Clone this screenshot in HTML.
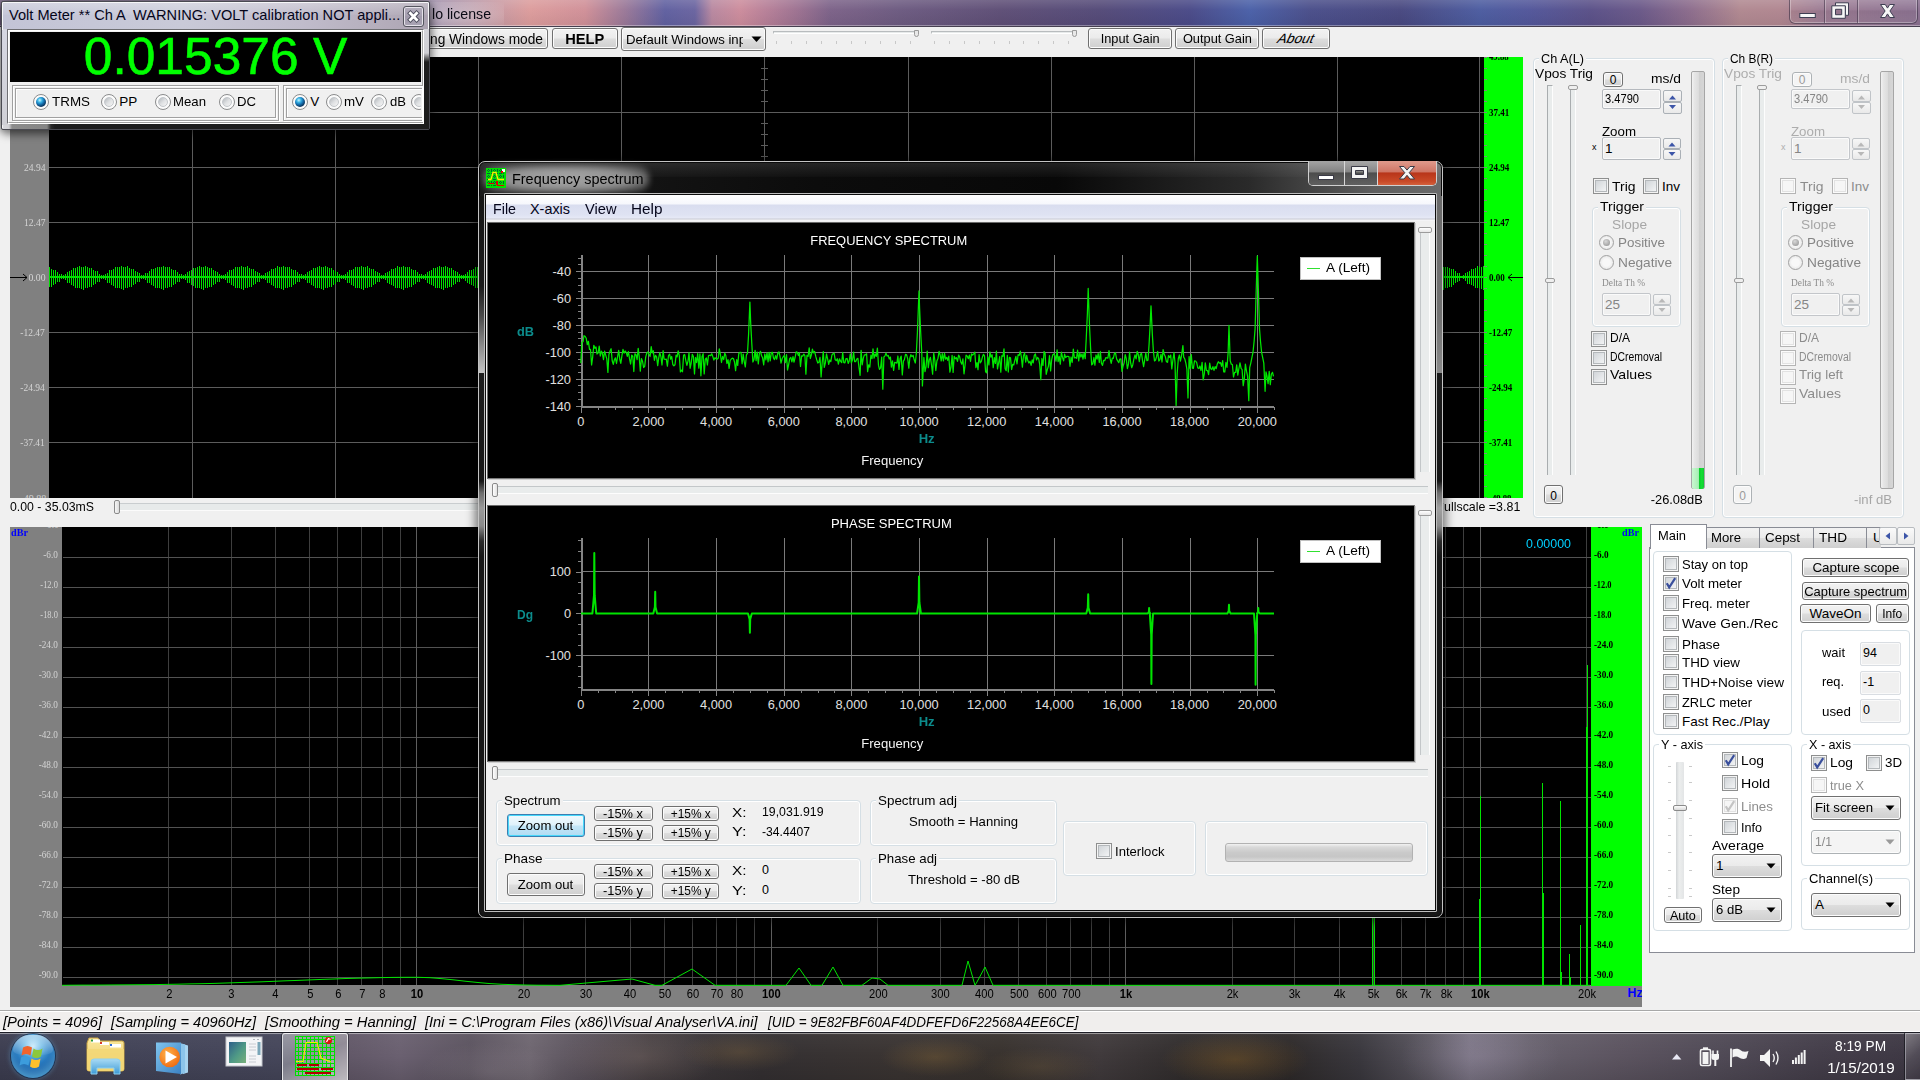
<!DOCTYPE html><html><head><meta charset="utf-8"><title>Visual Analyser</title><style>
html,body{margin:0;padding:0;}
body{width:1920px;height:1080px;overflow:hidden;position:relative;background:#f0f0f0;font-family:"Liberation Sans",sans-serif;}
div,span.t,svg{position:absolute;box-sizing:border-box;}
span.t{white-space:pre;display:block;}
.btn{border:1px solid #707070;border-radius:3px;background:linear-gradient(#f2f2f2 0%,#ebebeb 48%,#dddddd 52%,#cfcfcf 100%);box-shadow:inset 0 0 0 1px #fcfcfc;}
.btnd{border:1px solid #adb2b5;border-radius:3px;background:#f4f4f4;box-shadow:inset 0 0 0 1px #fcfcfc;}
.grp{border:1px solid #d5dfe5;border-radius:4px;box-shadow:inset 0 0 0 1px #fff;}
.edit{border:1px solid #abadb3;border-top-color:#abadb3;background:#f0f0f0;border-radius:1px;box-shadow:inset 0 0 0 1px #fff;}
.chk{width:13px;height:13px;border:1px solid #8e8f8f;background:linear-gradient(135deg,#d6d9dc 0%,#f3f4f5 100%);box-shadow:inset 0 0 0 1px #f4f4f4, inset 0 0 0 2px #b2b6b9;}
.chkd{width:13px;height:13px;border:1px solid #bcbcbc;background:#fafafa;box-shadow:inset 0 0 0 2px #f0f0f0;}
.rad{width:13px;height:13px;border:1px solid #8e8f8f;border-radius:50%;background:radial-gradient(circle at 60% 60%,#f6f6f6 0%,#e3e6e8 60%,#c9cdd0 100%);}
.radd{width:13px;height:13px;border:1px solid #b5b5b5;border-radius:50%;background:#f6f6f6;}
</style></head><body>
<div style="left:0px;top:0px;width:1920px;height:27px;background:linear-gradient(90deg,#7d6a8c 0px,#a090ac 430px,#b898a8 470px,#dc9c9c 530px,#d09098 585px,#9a7898 625px,#6060a0 665px,#6a64a0 695px,#b888a0 712px,#cc8c9c 740px,#b88098 765px,#9a7090 800px,#7c6288 830px,#6c5a80 900px,#5e4e76 1000px,#544a78 1100px,#4a4a88 1190px,#4a60a8 1250px,#4a4e8a 1310px,#484880 1400px,#4c5ca0 1480px,#52569a 1530px,#5a5088 1590px,#6a5888 1640px,#8c6c8c 1690px,#b08890 1740px,#b08690 1780px,#9a7890 1820px,#8a7090 1920px);"></div>
<div style="left:0px;top:0px;width:1920px;height:27px;background:linear-gradient(180deg,rgba(255,255,255,.14) 0px,rgba(255,255,255,.02) 10px,rgba(0,0,0,.05) 26px);"></div>
<div style="left:424px;top:2px;width:80px;height:24px;background:radial-gradient(ellipse at 40% 55%,rgba(255,255,255,.35) 0%,rgba(255,255,255,.18) 50%,rgba(255,255,255,0) 100%);"></div>
<div style="left:0px;top:25px;width:1920px;height:1px;background:rgba(255,255,255,.35);"></div>
<div style="left:0px;top:26px;width:1920px;height:1px;background:#463f50;"></div>
<span class="t" style="top:5.88px;font-size:15.5px;line-height:15.5px;color:#0a0a14;left:432.00px;transform-origin:0 0;transform:scaleX(0.9130);">lo license</span>
<div style="left:1789px;top:-2px;width:129px;height:26px;border:1px solid rgba(50,40,60,.55);border-radius:0 0 6px 6px;box-shadow:inset 0 0 0 1px rgba(255,255,255,.30);background:linear-gradient(rgba(255,255,255,.10),rgba(255,255,255,.03) 45%,rgba(0,0,0,.03) 50%,rgba(255,255,255,.05));"></div>
<div style="left:1824px;top:0px;width:1px;height:23px;background:rgba(50,40,60,.5);"></div>
<div style="left:1825px;top:0px;width:1px;height:23px;background:rgba(255,255,255,.28);"></div>
<div style="left:1857px;top:0px;width:1px;height:23px;background:rgba(50,40,60,.5);"></div>
<div style="left:1858px;top:0px;width:1px;height:23px;background:rgba(255,255,255,.28);"></div>
<svg style="left:1789px;top:0px" width="129" height="24" viewBox="0 0 129 24" >
<rect x="10.800" y="13.500" width="15.500" height="4" fill="#f6f6f6" stroke="#3e3e52" stroke-width="1"/>
<path d="M46.500 2.800 h13 v12.500 h-3 v-9 h-10z" fill="#f6f6f6" stroke="#3e3e52"/><path d="M42.800 5.800 h13.500 v12.500 h-13.500z M46.500 9.300 v5.400 h6.200 v-5.400z" fill="#f6f6f6" fill-rule="evenodd" stroke="#3e3e52"/>
<path d="M91.500 4.500 h4.800 l2.200 3.600 l2.200 -3.600 h4.800 l-4.600 6.500 l4.600 6.500 h-4.800 l-2.200 -3.600 l-2.200 3.600 h-4.800 l4.600 -6.500z" fill="#f6f6f6" stroke="#3e3e52" stroke-width="1"/>
</svg>
<div style="left:0px;top:27px;width:1920px;height:30px;background:#f0f0f0;"></div>
<div class="btn" style="left:380px;top:28px;width:168px;height:21px;"></div>
<span class="t" style="top:31.65px;font-size:14px;line-height:14px;color:#000;left:430.00px;transform-origin:0 0;transform:scaleX(0.9812);">ng Windows mode</span>
<div class="btn" style="left:552px;top:28px;width:66px;height:21px;"></div>
<span class="t" style="top:31.65px;font-size:14px;line-height:14px;color:#000;font-weight:bold;left:566.33px;transform-origin:50% 0;transform:scaleX(1.0445);">HELP</span>
<div class="btn" style="left:621px;top:27px;width:145px;height:24px;"></div>
<div style="left:626px;top:29px;width:117px;height:20px;overflow:hidden;"><span class="t" style="left:0;top:3.57px;font-size:13.500px;line-height:13.500px;transform-origin:0 0;transform:scaleX(0.9752)">Default Windows inp</span></div>
<svg style="left:750px;top:35px" width="14" height="8" viewBox="0 0 14 8" >
<path d="M1.500 1.500 h10 l-5 5.500z" fill="#000"/>
</svg>
<div style="left:773px;top:31px;width:146px;height:3px;background:#e7eaea;border:1px solid #b8bcbe;border-bottom-color:#fff;"></div>
<div style="left:914px;top:30px;width:5px;height:7px;background:#e8e8e8;border:1px solid #9a9a9a;border-radius:0 0 3px 3px;"></div>
<div style="left:776.0px;top:41px;width:1px;height:3px;background:#c8c8c8;"></div>
<div style="left:790.9px;top:41px;width:1px;height:3px;background:#c8c8c8;"></div>
<div style="left:805.8px;top:41px;width:1px;height:3px;background:#c8c8c8;"></div>
<div style="left:820.7px;top:41px;width:1px;height:3px;background:#c8c8c8;"></div>
<div style="left:835.6px;top:41px;width:1px;height:3px;background:#c8c8c8;"></div>
<div style="left:850.5px;top:41px;width:1px;height:3px;background:#c8c8c8;"></div>
<div style="left:865.4px;top:41px;width:1px;height:3px;background:#c8c8c8;"></div>
<div style="left:880.3px;top:41px;width:1px;height:3px;background:#c8c8c8;"></div>
<div style="left:895.2px;top:41px;width:1px;height:3px;background:#c8c8c8;"></div>
<div style="left:910.1px;top:41px;width:1px;height:3px;background:#c8c8c8;"></div>
<div style="left:931px;top:31px;width:146px;height:3px;background:#e7eaea;border:1px solid #b8bcbe;border-bottom-color:#fff;"></div>
<div style="left:1072px;top:30px;width:5px;height:7px;background:#e8e8e8;border:1px solid #9a9a9a;border-radius:0 0 3px 3px;"></div>
<div style="left:934.0px;top:41px;width:1px;height:3px;background:#c8c8c8;"></div>
<div style="left:948.9px;top:41px;width:1px;height:3px;background:#c8c8c8;"></div>
<div style="left:963.8px;top:41px;width:1px;height:3px;background:#c8c8c8;"></div>
<div style="left:978.7px;top:41px;width:1px;height:3px;background:#c8c8c8;"></div>
<div style="left:993.6px;top:41px;width:1px;height:3px;background:#c8c8c8;"></div>
<div style="left:1008.5px;top:41px;width:1px;height:3px;background:#c8c8c8;"></div>
<div style="left:1023.4px;top:41px;width:1px;height:3px;background:#c8c8c8;"></div>
<div style="left:1038.3px;top:41px;width:1px;height:3px;background:#c8c8c8;"></div>
<div style="left:1053.2px;top:41px;width:1px;height:3px;background:#c8c8c8;"></div>
<div style="left:1068.1px;top:41px;width:1px;height:3px;background:#c8c8c8;"></div>
<div class="btn" style="left:1088px;top:28px;width:84px;height:21px;"></div>
<span class="t" style="top:32.07px;font-size:13.5px;line-height:13.5px;color:#000;left:1098.85px;transform-origin:50% 0;transform:scaleX(0.9471);">Input Gain</span>
<div class="btn" style="left:1175px;top:28px;width:84px;height:21px;"></div>
<span class="t" style="top:32.07px;font-size:13.5px;line-height:13.5px;color:#000;left:1180.60px;transform-origin:50% 0;transform:scaleX(0.9479);">Output Gain</span>
<div class="btn" style="left:1262px;top:28px;width:68px;height:21px;"></div>
<span class="t" style="left:1275px;top:31.500px;font-size:13.500px;line-height:13.500px;color:#000;transform-origin:0 100%;transform:skewX(-24deg) scaleX(1.02);">About</span>
<div style="left:10px;top:57px;width:39px;height:441px;background:#808080;"></div>
<div style="left:49px;top:57px;width:1435px;height:441px;background:#000;"></div>
<div style="left:1484px;top:57px;width:39px;height:441px;background:#00ff00;"></div>
<svg style="left:0px;top:57px" width="1523" height="442" viewBox="0 0 1523 442" shape-rendering="crispEdges">
<path d="M192.5 0V441 M335.5 0V441 M478.5 0V441 M621.5 0V441 M764.5 0V441 M908.5 0V441 M1051.5 0V441 M1194.5 0V441 M1337.5 0V441 M1479.5 0V441 M49 55.5H1487 M49 110.5H1487 M49 165.5H1487 M49 220.5H1487 M49 275.5H1487 M49 330.5H1487 M49 385.5H1487" stroke="#5c5c5c" stroke-width="1" fill="none"/>
<path d="M761 11.5H768 M761 22.5H768 M761 33.5H768 M761 44.5H768 M761 55.5H768 M761 66.5H768 M761 77.5H768 M761 88.5H768 M761 99.5H768 M761 110.5H768 M761 121.5H768 M761 132.5H768 M761 143.5H768 M761 154.5H768 M761 165.5H768 M761 176.5H768 M761 187.5H768 M761 198.5H768 M761 209.5H768 M761 220.5H768 M761 231.5H768 M761 242.5H768 M761 253.5H768 M761 264.5H768 M761 275.5H768 M761 286.5H768 M761 297.5H768 M761 308.5H768 M761 319.5H768 M761 330.5H768 M761 341.5H768 M761 352.5H768 M761 363.5H768 M761 374.5H768 M761 385.5H768 M761 396.5H768 M761 407.5H768 M761 418.5H768 M761 429.5H768" stroke="#5c5c5c" stroke-width="1" fill="none"/>
<path d="M49.5 210.0V230.0 M51.5 211.7V230.3 M53.5 212.7V227.9 M55.5 213.1V226.6 M57.5 215.2V225.2 M59.5 216.6V224.8 M61.5 217.3V222.0 M63.5 218.4V221.7 M65.5 216.9V223.3 M67.5 214.7V226.1 M69.5 214.2V226.3 M71.5 212.9V227.7 M73.5 211.1V228.9 M75.5 211.0V231.1 M77.5 210.3V230.6 M79.5 209.0V231.2 M81.5 209.5V231.5 M83.5 209.5V232.7 M85.5 208.9V231.2 M87.5 210.2V230.8 M89.5 210.8V230.0 M91.5 210.9V230.3 M93.5 212.7V227.9 M95.5 213.9V226.6 M97.5 214.4V225.2 M99.5 216.7V224.8 M101.5 218.1V222.0 M103.5 217.6V221.7 M105.5 216.9V223.3 M107.5 215.5V226.1 M109.5 213.3V226.4 M111.5 212.9V227.7 M113.5 211.9V228.9 M115.5 210.2V231.1 M117.5 210.3V230.6 M119.5 209.8V231.2 M121.5 208.7V231.5 M123.5 209.5V232.7 M125.5 209.7V231.2 M127.5 209.4V230.8 M129.5 210.8V230.0 M131.5 211.7V230.3 M133.5 211.9V227.9 M135.5 213.9V226.6 M137.5 215.3V225.1 M139.5 215.9V224.8 M141.5 218.1V222.0 M143.5 218.4V221.7 M145.5 216.1V223.3 M147.5 215.5V226.1 M149.5 214.1V226.4 M151.5 212.1V227.7 M153.5 211.9V228.9 M155.5 211.0V231.1 M157.5 209.5V230.7 M159.5 209.8V231.2 M161.5 209.5V231.5 M163.5 208.7V232.7 M165.5 209.7V231.2 M167.5 210.2V230.7 M169.5 210.0V230.0 M171.5 211.7V230.3 M173.5 212.7V227.9 M175.5 213.1V226.6 M177.5 215.3V225.1 M179.5 216.7V224.8 M181.5 217.4V221.9 M183.5 218.4V221.7 M185.5 216.9V223.3 M187.5 214.7V226.1 M189.5 214.1V226.4 M191.5 212.9V227.7 M193.5 211.0V228.9 M195.5 211.0V231.1 M197.5 210.3V230.7 M199.5 209.0V231.2 M201.5 209.5V231.5 M203.5 209.5V232.7 M205.5 208.9V231.2 M207.5 210.2V230.7 M209.5 210.9V230.0 M211.5 210.9V230.3 M213.5 212.8V227.9 M215.5 214.0V226.6 M217.5 214.5V225.1 M219.5 216.7V224.7 M221.5 218.2V221.9 M223.5 217.5V221.7 M225.5 216.9V223.4 M227.5 215.4V226.1 M229.5 213.3V226.4 M231.5 212.9V227.7 M233.5 211.8V228.9 M235.5 210.1V231.1 M237.5 210.3V230.7 M239.5 209.8V231.2 M241.5 208.7V231.5 M243.5 209.5V232.7 M245.5 209.7V231.2 M247.5 209.4V230.7 M249.5 210.9V230.0 M251.5 211.7V230.2 M253.5 212.0V227.9 M255.5 214.0V226.6 M257.5 215.3V225.1 M259.5 215.9V224.7 M261.5 218.2V221.9 M263.5 218.3V221.7 M265.5 216.1V223.4 M267.5 215.4V226.1 M269.5 214.1V226.4 M271.5 212.1V227.8 M273.5 211.8V228.9 M275.5 210.9V231.1 M277.5 209.4V230.7 M279.5 209.8V231.2 M281.5 209.5V231.5 M283.5 208.7V232.7 M285.5 209.7V231.2 M287.5 210.2V230.7 M289.5 210.1V230.0 M291.5 211.7V230.2 M293.5 212.8V227.9 M295.5 213.2V226.5 M297.5 215.3V225.1 M299.5 216.7V224.7 M301.5 217.4V221.9 M303.5 218.3V221.8 M305.5 216.8V223.4 M307.5 214.6V226.2 M309.5 214.1V226.4 M311.5 212.9V227.8 M313.5 211.0V228.9 M315.5 210.9V231.1 M317.5 210.2V230.7 M319.5 209.0V231.2 M321.5 209.5V231.5 M323.5 209.5V232.7 M325.5 209.0V231.2 M327.5 210.2V230.7 M329.5 210.9V230.0 M331.5 210.9V230.2 M333.5 212.8V227.9 M335.5 214.0V226.5 M337.5 214.5V225.1 M339.5 216.7V224.7 M341.5 218.2V221.9 M343.5 217.5V221.8 M345.5 216.8V223.4 M347.5 215.4V226.2 M349.5 213.3V226.4 M351.5 212.9V227.8 M353.5 211.8V229.0 M355.5 210.1V231.1 M357.5 210.2V230.7 M359.5 209.8V231.2 M361.5 208.7V231.5 M363.5 209.5V232.7 M365.5 209.8V231.2 M367.5 209.4V230.7 M369.5 210.9V230.0 M371.5 211.8V230.2 M373.5 212.0V227.8 M375.5 214.0V226.5 M377.5 215.3V225.1 M379.5 216.0V224.7 M381.5 218.2V221.9 M383.5 218.3V221.8 M385.5 216.0V223.4 M387.5 215.4V226.2 M389.5 214.1V226.5 M391.5 212.1V227.8 M393.5 211.8V229.0 M395.5 210.9V231.1 M397.5 209.4V230.7 M399.5 209.8V231.2 M401.5 209.5V231.5 M403.5 208.7V232.7 M405.5 209.8V231.2 M407.5 210.2V230.7 M409.5 210.1V230.0 M411.5 211.8V230.2 M413.5 212.8V227.8 M415.5 213.2V226.5 M417.5 215.3V225.0 M419.5 216.8V224.7 M421.5 217.4V221.8 M423.5 218.3V221.8 M425.5 216.8V223.4 M427.5 214.6V226.2 M429.5 214.0V226.5 M431.5 212.8V227.8 M433.5 211.0V229.0 M435.5 210.9V231.1 M437.5 210.2V230.7 M439.5 209.0V231.2 M441.5 209.5V231.5 M443.5 209.5V232.7 M445.5 209.0V231.2 M447.5 210.2V230.7 M449.5 210.9V230.0 M451.5 211.0V230.2 M453.5 212.8V227.8 M455.5 214.0V226.5 M457.5 214.6V225.0 M459.5 216.8V224.7 M461.5 218.3V221.8 M463.5 217.5V221.8 M465.5 216.8V223.5 M467.5 215.4V226.2 M469.5 213.2V226.5 M471.5 212.8V227.8 M473.5 211.8V229.0 M475.5 210.1V231.2 M477.5 210.2V230.7 M479.5 209.8V231.2 M481.5 208.7V231.5 M483.5 209.5V232.7 M485.5 209.8V231.2 M487.5 209.4V230.7 M489.5 210.9V229.9 M491.5 211.8V230.2 M493.5 212.0V227.8 M495.5 214.0V226.5 M497.5 215.4V225.0 M499.5 216.0V224.6 M501.5 218.3V221.8 M503.5 218.2V221.8 M505.5 216.0V223.5 M507.5 215.3V226.2 M509.5 214.0V226.5 M511.5 212.0V227.8 M513.5 211.8V229.0 M515.5 210.9V231.2 M517.5 209.4V230.7 M519.5 209.8V231.2 M521.5 209.5V231.5 M523.5 208.7V232.7 M525.5 209.8V231.2 M527.5 210.2V230.7 M529.5 210.1V229.9 M531.5 211.8V230.2 M533.5 212.9V227.8 M535.5 213.3V226.5 M537.5 215.4V225.0 M539.5 216.8V224.6 M541.5 217.5V221.8 M543.5 218.2V221.9 M545.5 216.8V223.5 M547.5 214.5V226.3 M549.5 214.0V226.5 M551.5 212.8V227.8 M553.5 211.0V229.0 M555.5 210.9V231.2 M557.5 210.2V230.7 M559.5 209.0V231.2 M561.5 209.5V231.5 M563.5 209.5V232.7 M565.5 209.0V231.2 M567.5 210.2V230.7 M569.5 210.9V229.9 M571.5 211.0V230.2 M573.5 212.9V227.8 M575.5 214.1V226.4 M577.5 214.6V225.0 M579.5 216.8V224.6 M581.5 218.3V221.8 M583.5 217.4V221.9 M585.5 216.7V223.5 M587.5 215.3V226.3 M589.5 213.2V226.5 M591.5 212.8V227.9 M593.5 211.7V229.0 M595.5 210.1V231.2 M597.5 210.2V230.7 M599.5 209.8V231.2 M601.5 208.7V231.5 M603.5 209.5V232.7 M605.5 209.8V231.2 M607.5 209.4V230.7 M609.5 210.9V229.9 M611.5 211.8V230.1 M613.5 212.1V227.8 M615.5 214.1V226.4 M617.5 215.4V225.0 M619.5 216.0V224.6 M621.5 218.3V221.8 M623.5 218.2V221.9 M625.5 215.9V223.5 M627.5 215.3V226.3 M629.5 214.0V226.5 M631.5 212.0V227.9 M633.5 211.7V229.0 M635.5 210.9V231.2 M637.5 209.4V230.7 M639.5 209.7V231.2 M641.5 209.5V231.5 M643.5 208.7V232.7 M645.5 209.8V231.2 M647.5 210.2V230.7 M649.5 210.1V229.9 M651.5 211.8V230.1 M653.5 212.9V227.8 M655.5 213.3V226.4 M657.5 215.4V224.9 M659.5 216.9V224.6 M661.5 217.5V221.7 M663.5 218.2V221.9 M665.5 216.7V223.5 M667.5 214.5V226.3 M669.5 214.0V226.6 M671.5 212.8V227.9 M673.5 210.9V229.0 M675.5 210.9V231.2 M677.5 210.2V230.7 M679.5 208.9V231.2 M681.5 209.5V231.5 M683.5 209.5V232.7 M685.5 209.0V231.2 M687.5 210.3V230.7 M689.5 210.9V229.9 M691.5 211.0V230.1 M693.5 212.9V227.7 M695.5 214.1V226.4 M697.5 214.6V224.9 M699.5 216.9V224.6 M701.5 218.3V221.7 M703.5 217.4V221.9 M705.5 216.7V223.5 M707.5 215.3V226.3 M709.5 213.2V226.6 M711.5 212.8V227.9 M713.5 211.7V229.1 M715.5 210.1V231.2 M717.5 210.2V230.7 M719.5 209.7V231.2 M721.5 208.7V231.5 M723.5 209.5V232.7 M725.5 209.8V231.2 M727.5 209.5V230.7 M729.5 211.0V229.9 M731.5 211.8V230.1 M733.5 212.1V227.7 M735.5 214.1V226.4 M737.5 215.5V224.9 M739.5 216.1V224.5 M741.5 218.4V221.7 M743.5 218.2V221.9 M745.5 215.9V223.6 M747.5 215.3V226.3 M749.5 213.9V226.6 M751.5 211.9V227.9 M753.5 211.7V229.1 M755.5 210.8V231.2 M757.5 209.4V230.7 M759.5 209.7V231.2 M761.5 209.5V231.5 M763.5 208.7V232.7 M765.5 209.8V231.2 M767.5 210.3V230.7 M769.5 210.2V229.9 M771.5 211.9V230.1 M773.5 212.9V227.7 M775.5 213.3V226.4 M777.5 215.5V224.9 M779.5 216.9V224.5 M781.5 217.6V221.7 M783.5 218.1V222.0 M785.5 216.7V223.6 M787.5 214.5V226.3 M789.5 213.9V226.6 M791.5 212.7V227.9 M793.5 210.9V229.1 M795.5 210.8V231.2 M797.5 210.2V230.8 M799.5 208.9V231.2 M801.5 209.5V231.5 M803.5 209.5V232.7 M805.5 209.0V231.2 M807.5 210.3V230.6 M809.5 211.0V229.9 M811.5 211.1V230.1 M813.5 212.9V227.7 M815.5 214.1V226.4 M817.5 214.7V224.9 M819.5 216.9V224.5 M821.5 218.4V221.7 M823.5 217.3V222.0 M825.5 216.7V223.6 M827.5 215.2V226.4 M829.5 213.1V226.6 M831.5 212.7V227.9 M833.5 211.7V229.1 M835.5 210.0V231.2 M837.5 210.2V230.8 M839.5 209.7V231.2 M841.5 208.7V231.5 M843.5 209.5V232.7 M845.5 209.8V231.2 M847.5 209.5V230.6 M849.5 211.0V229.9 M851.5 211.9V230.1 M853.5 212.1V227.7 M855.5 214.2V226.3 M857.5 215.5V224.9 M859.5 216.1V224.5 M861.5 218.4V221.7 M863.5 218.1V222.0 M865.5 215.8V223.6 M867.5 215.2V226.4 M869.5 213.9V226.6 M871.5 211.9V227.9 M873.5 211.7V229.1 M875.5 210.8V231.2 M877.5 209.4V230.8 M879.5 209.7V231.2 M881.5 209.5V231.5 M883.5 208.7V232.7 M885.5 209.8V231.2 M887.5 210.3V230.6 M889.5 210.2V229.9 M891.5 211.9V230.1 M893.5 213.0V227.7 M895.5 213.4V226.3 M897.5 215.5V224.9 M899.5 216.9V224.5 M901.5 217.6V221.6 M903.5 218.1V222.0 M905.5 216.6V223.6 M907.5 214.4V226.4 M909.5 213.9V226.6 M911.5 212.7V228.0 M913.5 210.9V229.1 M915.5 210.8V231.2 M917.5 210.2V230.8 M919.5 208.9V231.3 M921.5 209.5V231.5 M923.5 209.5V232.7 M925.5 209.0V231.2 M927.5 210.3V230.6 M929.5 211.0V229.9 M931.5 211.1V230.1 M933.5 213.0V227.7 M935.5 214.2V226.3 M937.5 214.7V224.8 M939.5 217.0V224.5 M941.5 218.4V221.6 M943.5 217.3V222.0 M945.5 216.6V223.6 M947.5 215.2V226.4 M949.5 213.1V226.7 M951.5 212.7V228.0 M953.5 211.7V229.1 M955.5 210.0V231.3 M957.5 210.2V230.8 M959.5 209.7V231.3 M961.5 208.7V231.5 M963.5 209.5V232.6 M965.5 209.8V231.2 M967.5 209.5V230.6 M969.5 211.0V229.8 M971.5 211.9V230.0 M973.5 212.2V227.7 M975.5 214.2V226.3 M977.5 215.5V224.8 M979.5 216.2V224.4 M981.5 218.4V221.6 M983.5 218.1V222.0 M985.5 215.8V223.7 M987.5 215.2V226.4 M989.5 213.9V226.7 M991.5 211.9V228.0 M993.5 211.6V229.1 M995.5 210.8V231.3 M997.5 209.3V230.8 M999.5 209.7V231.3 M1001.5 209.5V231.5 M1003.5 208.7V232.6 M1005.5 209.8V231.2 M1007.5 210.3V230.6 M1009.5 210.2V229.8 M1011.5 211.9V230.0 M1013.5 213.0V227.6 M1015.5 213.4V226.3 M1017.5 215.6V224.8 M1019.5 217.0V224.4 M1021.5 217.7V221.6 M1023.5 218.0V222.1 M1025.5 216.6V223.7 M1027.5 214.4V226.4 M1029.5 213.9V226.7 M1031.5 212.7V228.0 M1033.5 210.8V229.1 M1035.5 210.8V231.3 M1037.5 210.1V230.8 M1039.5 208.9V231.3 M1041.5 209.5V231.5 M1043.5 209.5V232.6 M1045.5 209.0V231.2 M1047.5 210.3V230.6 M1049.5 211.0V229.8 M1051.5 211.1V230.0 M1053.5 213.0V227.6 M1055.5 214.2V226.3 M1057.5 214.8V224.8 M1059.5 217.0V224.4 M1061.5 218.5V221.6 M1063.5 217.2V222.1 M1065.5 216.6V223.7 M1067.5 215.2V226.4 M1069.5 213.0V226.7 M1071.5 212.7V228.0 M1073.5 211.6V229.1 M1075.5 210.0V231.3 M1077.5 210.1V230.8 M1079.5 209.7V231.3 M1081.5 208.7V231.5 M1083.5 209.6V232.6 M1085.5 209.8V231.1 M1087.5 209.5V230.6 M1089.5 211.0V229.8 M1091.5 211.9V230.0 M1093.5 212.2V227.6 M1095.5 214.2V226.3 M1097.5 215.6V224.8 M1099.5 216.2V224.4 M1101.5 218.5V221.6 M1103.5 218.0V222.1 M1105.5 215.7V223.7 M1107.5 215.1V226.5 M1109.5 213.8V226.7 M1111.5 211.8V228.0 M1113.5 211.6V229.2 M1115.5 210.8V231.3 M1117.5 209.3V230.8 M1119.5 209.7V231.3 M1121.5 209.5V231.5 M1123.5 208.8V232.6 M1125.5 209.8V231.1 M1127.5 210.3V230.6 M1129.5 210.2V229.8 M1131.5 211.9V230.0 M1133.5 213.0V227.6 M1135.5 213.5V226.2 M1137.5 215.6V224.8 M1139.5 217.0V224.4 M1141.5 217.7V221.5 M1143.5 218.0V222.1 M1145.5 216.5V223.7 M1147.5 214.3V226.5 M1149.5 213.8V226.7 M1151.5 212.6V228.0 M1153.5 210.8V229.2 M1155.5 210.8V231.3 M1157.5 210.1V230.8 M1159.5 208.9V231.3 M1161.5 209.5V231.5 M1163.5 209.6V232.6 M1165.5 209.0V231.1 M1167.5 210.3V230.6 M1169.5 211.0V229.8 M1171.5 211.2V230.0 M1173.5 213.0V227.6 M1175.5 214.3V226.2 M1177.5 214.8V224.7 M1179.5 217.0V224.4 M1181.5 218.5V221.5 M1183.5 217.2V222.1 M1185.5 216.5V223.7 M1187.5 215.1V226.5 M1189.5 213.0V226.7 M1191.5 212.6V228.0 M1193.5 211.6V229.2 M1195.5 210.0V231.3 M1197.5 210.1V230.8 M1199.5 209.7V231.3 M1201.5 208.7V231.5 M1203.5 209.6V232.6 M1205.5 209.8V231.1 M1207.5 209.5V230.6 M1209.5 211.0V229.8 M1211.5 212.0V230.0 M1213.5 212.2V227.6 M1215.5 214.3V226.2 M1217.5 215.6V224.7 M1219.5 216.3V224.3 M1221.5 218.5V221.5 M1223.5 218.0V222.1 M1225.5 215.7V223.8 M1227.5 215.1V226.5 M1229.5 213.8V226.8 M1231.5 211.8V228.1 M1233.5 211.6V229.2 M1235.5 210.8V231.3 M1237.5 209.3V230.8 M1239.5 209.7V231.3 M1241.5 209.5V231.5 M1243.5 208.8V232.6 M1245.5 209.8V231.1 M1247.5 210.3V230.6 M1249.5 210.3V229.8 M1251.5 212.0V230.0 M1253.5 213.1V227.6 M1255.5 213.5V226.2 M1257.5 215.6V224.7 M1259.5 217.1V224.3 M1261.5 217.8V221.5 M1263.5 218.0V222.2 M1265.5 216.5V223.8 M1267.5 214.3V226.5 M1269.5 213.8V226.8 M1271.5 212.6V228.1 M1273.5 210.8V229.2 M1275.5 210.7V231.3 M1277.5 210.1V230.8 M1279.5 208.9V231.3 M1281.5 209.5V231.5 M1283.5 209.6V232.6 M1285.5 209.0V231.1 M1287.5 210.3V230.6 M1289.5 211.1V229.8 M1291.5 211.2V230.0 M1293.5 213.1V227.6 M1295.5 214.3V226.2 M1297.5 214.9V224.7 M1299.5 217.1V224.3 M1301.5 218.6V221.5 M1303.5 217.1V222.2 M1305.5 216.5V223.8 M1307.5 215.1V226.5 M1309.5 213.0V226.8 M1311.5 212.6V228.1 M1313.5 211.6V229.2 M1315.5 209.9V231.3 M1317.5 210.1V230.8 M1319.5 209.7V231.3 M1321.5 208.7V231.5 M1323.5 209.6V232.6 M1325.5 209.8V231.1 M1327.5 209.6V230.6 M1329.5 211.1V229.8 M1331.5 212.0V229.9 M1333.5 212.3V227.5 M1335.5 214.3V226.2 M1337.5 215.7V224.7 M1339.5 216.3V224.3 M1341.5 218.6V221.5 M1343.5 217.9V222.2 M1345.5 215.7V223.8 M1347.5 215.1V226.6 M1349.5 213.8V226.8 M1351.5 211.8V228.1 M1353.5 211.6V229.2 M1355.5 210.7V231.3 M1357.5 209.3V230.8 M1359.5 209.7V231.3 M1361.5 209.5V231.5 M1363.5 208.8V232.6 M1365.5 209.8V231.1 M1367.5 210.4V230.6 M1369.5 210.3V229.8 M1371.5 212.0V229.9 M1373.5 213.1V227.5 M1375.5 213.5V226.2 M1377.5 215.7V224.7 M1379.5 217.1V224.3 M1381.5 217.8V221.4 M1383.5 217.9V222.2 M1385.5 216.4V223.8 M1387.5 214.2V226.6 M1389.5 213.7V226.8 M1391.5 212.6V228.1 M1393.5 210.8V229.2 M1395.5 210.7V231.3 M1397.5 210.1V230.8 M1399.5 208.9V231.3 M1401.5 209.5V231.5 M1403.5 209.6V232.6 M1405.5 209.1V231.1 M1407.5 210.4V230.5 M1409.5 211.1V229.7 M1411.5 211.2V229.9 M1413.5 213.1V227.5 M1415.5 214.3V226.1 M1417.5 214.9V224.7 M1419.5 217.1V224.3 M1421.5 218.6V221.4 M1423.5 217.1V222.2 M1425.5 216.4V223.8 M1427.5 215.0V226.6 M1429.5 212.9V226.8 M1431.5 212.6V228.1 M1433.5 211.5V229.2 M1435.5 209.9V231.4 M1437.5 210.1V230.8 M1439.5 209.7V231.3 M1441.5 208.7V231.5 M1443.5 209.6V232.6 M1445.5 209.9V231.1 M1447.5 209.6V230.5 M1449.5 211.1V229.7 M1451.5 212.0V229.9 M1453.5 212.3V227.5 M1455.5 214.4V226.1 M1457.5 215.7V224.6 M1459.5 216.3V224.2 M1461.5 218.6V221.4 M1463.5 217.9V222.2 M1465.5 215.6V223.9 M1467.5 215.0V226.6 M1469.5 213.7V226.8 M1471.5 211.7V228.1 M1473.5 211.5V229.2 M1475.5 210.7V231.4 M1477.5 209.3V230.9 M1479.5 209.7V231.3 M1481.5 209.5V231.5 M1483.5 208.8V232.6" stroke="#00e000" stroke-width="1" fill="none"/>
<path d="M49 220H1484" stroke="#00e000" stroke-width="2" fill="none"/>
<path d="M1484 0.5H1487 M1484 11.5H1487 M1484 22.5H1487 M1484 33.5H1487 M1484 44.5H1487 M1484 55.5H1487 M1484 66.5H1487 M1484 77.5H1487 M1484 88.5H1487 M1484 99.5H1487 M1484 110.5H1487 M1484 121.5H1487 M1484 132.5H1487 M1484 143.5H1487 M1484 154.5H1487 M1484 165.5H1487 M1484 176.5H1487 M1484 187.5H1487 M1484 198.5H1487 M1484 209.5H1487 M1484 220.5H1487 M1484 231.5H1487 M1484 242.5H1487 M1484 253.5H1487 M1484 264.5H1487 M1484 275.5H1487 M1484 286.5H1487 M1484 297.5H1487 M1484 308.5H1487 M1484 319.5H1487 M1484 330.5H1487 M1484 341.5H1487 M1484 352.5H1487 M1484 363.5H1487 M1484 374.5H1487 M1484 385.5H1487 M1484 396.5H1487 M1484 407.5H1487 M1484 418.5H1487 M1484 429.5H1487 M1484 440.5H1487" stroke="#7a8a7a" stroke-width="1" fill="none"/>
<path d="M10 220.500H27M23 217l4 3.500l-4 3.500" stroke="#000" stroke-width="1" fill="none" shape-rendering="auto"/>
<path d="M1523 220.500H1508M1512 217l-4 3.500l4 3.500" stroke="#000" stroke-width="1" fill="none" shape-rendering="auto"/>
</svg>
<span class="t" style="top:107.62px;font-size:10px;line-height:10px;color:#d4d4d4;font-family:'Liberation Serif',serif;left:22.80px;transform-origin:100% 0;transform:scaleX(0.9556);">37.41</span>
<span class="t" style="top:107.62px;font-size:10px;line-height:10px;color:#000;font-family:'Liberation Serif',serif;font-weight:bold;left:1489.00px;transform-origin:0 0;transform:scaleX(0.9000);">37.41</span>
<span class="t" style="top:162.62px;font-size:10px;line-height:10px;color:#d4d4d4;font-family:'Liberation Serif',serif;left:22.80px;transform-origin:100% 0;transform:scaleX(0.9556);">24.94</span>
<span class="t" style="top:162.62px;font-size:10px;line-height:10px;color:#000;font-family:'Liberation Serif',serif;font-weight:bold;left:1489.00px;transform-origin:0 0;transform:scaleX(0.9000);">24.94</span>
<span class="t" style="top:217.62px;font-size:10px;line-height:10px;color:#d4d4d4;font-family:'Liberation Serif',serif;left:22.80px;transform-origin:100% 0;transform:scaleX(0.9556);">12.47</span>
<span class="t" style="top:217.62px;font-size:10px;line-height:10px;color:#000;font-family:'Liberation Serif',serif;font-weight:bold;left:1489.00px;transform-origin:0 0;transform:scaleX(0.9000);">12.47</span>
<span class="t" style="top:272.62px;font-size:10px;line-height:10px;color:#d4d4d4;font-family:'Liberation Serif',serif;left:27.80px;transform-origin:100% 0;transform:scaleX(0.9714);">0.00</span>
<span class="t" style="top:272.62px;font-size:10px;line-height:10px;color:#000;font-family:'Liberation Serif',serif;font-weight:bold;left:1489.00px;transform-origin:0 0;transform:scaleX(0.9000);">0.00</span>
<span class="t" style="top:327.62px;font-size:10px;line-height:10px;color:#d4d4d4;font-family:'Liberation Serif',serif;left:19.47px;transform-origin:100% 0;transform:scaleX(0.9485);">-12.47</span>
<span class="t" style="top:327.62px;font-size:10px;line-height:10px;color:#000;font-family:'Liberation Serif',serif;font-weight:bold;left:1489.00px;transform-origin:0 0;transform:scaleX(0.9000);">-12.47</span>
<span class="t" style="top:382.62px;font-size:10px;line-height:10px;color:#d4d4d4;font-family:'Liberation Serif',serif;left:19.47px;transform-origin:100% 0;transform:scaleX(0.9485);">-24.94</span>
<span class="t" style="top:382.62px;font-size:10px;line-height:10px;color:#000;font-family:'Liberation Serif',serif;font-weight:bold;left:1489.00px;transform-origin:0 0;transform:scaleX(0.9000);">-24.94</span>
<span class="t" style="top:437.62px;font-size:10px;line-height:10px;color:#d4d4d4;font-family:'Liberation Serif',serif;left:19.47px;transform-origin:100% 0;transform:scaleX(0.9485);">-37.41</span>
<span class="t" style="top:437.62px;font-size:10px;line-height:10px;color:#000;font-family:'Liberation Serif',serif;font-weight:bold;left:1489.00px;transform-origin:0 0;transform:scaleX(0.9000);">-37.41</span>
<div style="left:10px;top:57px;width:39px;height:6px;overflow:hidden;"><span class="t" style="left:14px;top:-5px;font-size:10px;line-height:10px;color:#d4d4d4;font-family:'Liberation Serif',serif">49.88</span></div>
<div style="left:10px;top:492px;width:39px;height:6px;overflow:hidden;"><span class="t" style="left:10.500px;top:1.500px;font-size:10px;line-height:10px;color:#d4d4d4;font-family:'Liberation Serif',serif">-49.88</span></div>
<div style="left:1484px;top:57px;width:39px;height:6px;overflow:hidden;"><span class="t" style="left:5px;top:-5px;font-size:10px;line-height:10px;color:#000;font-weight:bold;font-family:'Liberation Serif',serif;transform:scaleX(.87);transform-origin:0 0">49.88</span></div>
<div style="left:1484px;top:492px;width:39px;height:6px;overflow:hidden;"><span class="t" style="left:5px;top:1.500px;font-size:10px;line-height:10px;color:#000;font-weight:bold;font-family:'Liberation Serif',serif;transform:scaleX(.87);transform-origin:0 0">-49.88</span></div>
<span class="t" style="top:500.00px;font-size:13px;line-height:13px;color:#000;left:10.00px;transform-origin:0 0;transform:scaleX(0.9450);">0.00 - 35.03mS</span>
<div style="left:118px;top:503px;width:1326px;height:8px;background:#e7eaea;border-top:1px solid #c9cdcf;border-bottom:1px solid #fbfbfb;"></div>
<div style="left:114px;top:500px;width:6px;height:14px;background:linear-gradient(90deg,#f6f6f6,#dcdcdc);border:1px solid #8a8a8a;border-radius:2px;"></div>
<span class="t" style="top:499.70px;font-size:13px;line-height:13px;color:#000;left:1444.20px;transform-origin:0 0;transform:scaleX(0.9554);">ullscale =3.81</span>
<div style="left:10px;top:527px;width:1632px;height:480px;background:#808080;"></div>
<div style="left:62px;top:527px;width:1529px;height:458px;background:#000;"></div>
<div style="left:1591px;top:527px;width:51px;height:459px;background:#00ff00;"></div>
<svg style="left:0px;top:527px" width="1642" height="460" viewBox="0 0 1642 460" shape-rendering="crispEdges">
<path d="M168.5 0V458 M231.5 0V458 M275.5 0V458 M309.5 0V458 M337.5 0V458 M361.5 0V458 M382.5 0V458 M400.5 0V458 M416.5 0V458 M523.5 0V458 M585.5 0V458 M630.5 0V458 M664.5 0V458 M692.5 0V458 M716.5 0V458 M736.5 0V458 M754.5 0V458 M771.5 0V458 M877.5 0V458 M940.5 0V458 M984.5 0V458 M1018.5 0V458 M1046.5 0V458 M1070.5 0V458 M1091.5 0V458 M1109.5 0V458 M1125.5 0V458 M1232.5 0V458 M1294.5 0V458 M1339.5 0V458 M1373.5 0V458 M1401.5 0V458 M1425.5 0V458 M1445.5 0V458 M1463.5 0V458 M1480.5 0V458 M1586.5 0V458" stroke="#3e3e3e" stroke-width="1" fill="none"/>
<path d="M63 30.5H1591 M63 60.5H1591 M63 90.5H1591 M63 120.5H1591 M63 150.5H1591 M63 180.5H1591 M63 210.5H1591 M63 240.5H1591 M63 270.5H1591 M63 300.5H1591 M63 330.5H1591 M63 360.5H1591 M63 390.5H1591 M63 420.5H1591 M63 450.5H1591" stroke="#525252" stroke-width="1" fill="none"/>
<path d="M416.5 0V458 M771.5 0V458 M1125.5 0V458 M1480.5 0V458" stroke="#5e5e5e" stroke-width="1" fill="none"/>
<polyline points="62.0,458.3 70.0,458.2 82.0,458.1 94.0,458.1 106.0,458.0 118.0,457.9 130.0,457.8 142.0,457.7 154.0,457.6 166.0,457.4 178.0,457.2 190.0,456.9 202.0,456.7 214.0,456.4 226.0,456.0 238.0,455.6 250.0,455.2 262.0,454.8 274.0,454.3 286.0,453.8 298.0,453.4 310.0,452.9 322.0,452.4 334.0,452.0 346.0,451.5 358.0,451.2 370.0,450.9 382.0,450.6 394.0,450.4 406.0,450.3 418.0,450.3 430.0,450.7 442.0,451.7 454.0,452.9 466.0,454.3 478.0,455.5 490.0,456.6 502.0,457.3 514.0,457.7 526.0,458.0 538.0,458.2 560.0,458.3 632.0,452.0 655.0,458.3 662.0,458.3 692.0,442.0 715.0,458.3 786.0,458.3 799.0,441.0 811.0,458.3 822.0,458.3 833.0,440.0 843.0,458.3 862.0,458.3 872.0,451.0 880.0,452.0 888.0,458.3 962.0,458.3 968.0,434.0 975.0,458.3 977.0,455.0 985.0,440.0 993.0,458.3 1590.0,458.3" stroke="#00e400" stroke-width="1" fill="none" shape-rendering="auto"/>
<path d="M1372.5 458V388 M1374.500 458V388 M1480.5 458V269 M1479.500 458V372 M1542.5 458V256 M1543.500 458V366 M1560.5 458V274 M1569.5 458V427 M1570.500 458V450 M1561.5 458V445 M1580.5 458V398 M1586.500 458V200 M1587.500 458V138" stroke="#00e400" stroke-width="1" fill="none"/>
</svg>
<span class="t" style="top:549.62px;font-size:10px;line-height:10px;color:#d4d4d4;font-family:'Liberation Serif',serif;left:42.47px;transform-origin:100% 0;transform:scaleX(0.9200);">-6.0</span>
<span class="t" style="top:549.62px;font-size:10px;line-height:10px;color:#000;font-family:'Liberation Serif',serif;font-weight:bold;left:1594.00px;transform-origin:0 0;transform:scaleX(0.9200);">-6.0</span>
<span class="t" style="top:579.62px;font-size:10px;line-height:10px;color:#d4d4d4;font-family:'Liberation Serif',serif;left:37.47px;transform-origin:100% 0;transform:scaleX(0.8400);">-12.0</span>
<span class="t" style="top:579.62px;font-size:10px;line-height:10px;color:#000;font-family:'Liberation Serif',serif;font-weight:bold;left:1594.00px;transform-origin:0 0;transform:scaleX(0.8400);">-12.0</span>
<span class="t" style="top:609.62px;font-size:10px;line-height:10px;color:#d4d4d4;font-family:'Liberation Serif',serif;left:37.47px;transform-origin:100% 0;transform:scaleX(0.8400);">-18.0</span>
<span class="t" style="top:609.62px;font-size:10px;line-height:10px;color:#000;font-family:'Liberation Serif',serif;font-weight:bold;left:1594.00px;transform-origin:0 0;transform:scaleX(0.8400);">-18.0</span>
<span class="t" style="top:639.62px;font-size:10px;line-height:10px;color:#d4d4d4;font-family:'Liberation Serif',serif;left:37.47px;transform-origin:100% 0;transform:scaleX(0.9200);">-24.0</span>
<span class="t" style="top:639.62px;font-size:10px;line-height:10px;color:#000;font-family:'Liberation Serif',serif;font-weight:bold;left:1594.00px;transform-origin:0 0;transform:scaleX(0.9200);">-24.0</span>
<span class="t" style="top:669.62px;font-size:10px;line-height:10px;color:#d4d4d4;font-family:'Liberation Serif',serif;left:37.47px;transform-origin:100% 0;transform:scaleX(0.9200);">-30.0</span>
<span class="t" style="top:669.62px;font-size:10px;line-height:10px;color:#000;font-family:'Liberation Serif',serif;font-weight:bold;left:1594.00px;transform-origin:0 0;transform:scaleX(0.9200);">-30.0</span>
<span class="t" style="top:699.62px;font-size:10px;line-height:10px;color:#d4d4d4;font-family:'Liberation Serif',serif;left:37.47px;transform-origin:100% 0;transform:scaleX(0.9200);">-36.0</span>
<span class="t" style="top:699.62px;font-size:10px;line-height:10px;color:#000;font-family:'Liberation Serif',serif;font-weight:bold;left:1594.00px;transform-origin:0 0;transform:scaleX(0.9200);">-36.0</span>
<span class="t" style="top:729.62px;font-size:10px;line-height:10px;color:#d4d4d4;font-family:'Liberation Serif',serif;left:37.47px;transform-origin:100% 0;transform:scaleX(0.9200);">-42.0</span>
<span class="t" style="top:729.62px;font-size:10px;line-height:10px;color:#000;font-family:'Liberation Serif',serif;font-weight:bold;left:1594.00px;transform-origin:0 0;transform:scaleX(0.9200);">-42.0</span>
<span class="t" style="top:759.62px;font-size:10px;line-height:10px;color:#d4d4d4;font-family:'Liberation Serif',serif;left:37.47px;transform-origin:100% 0;transform:scaleX(0.9200);">-48.0</span>
<span class="t" style="top:759.62px;font-size:10px;line-height:10px;color:#000;font-family:'Liberation Serif',serif;font-weight:bold;left:1594.00px;transform-origin:0 0;transform:scaleX(0.9200);">-48.0</span>
<span class="t" style="top:789.62px;font-size:10px;line-height:10px;color:#d4d4d4;font-family:'Liberation Serif',serif;left:37.47px;transform-origin:100% 0;transform:scaleX(0.9200);">-54.0</span>
<span class="t" style="top:789.62px;font-size:10px;line-height:10px;color:#000;font-family:'Liberation Serif',serif;font-weight:bold;left:1594.00px;transform-origin:0 0;transform:scaleX(0.9200);">-54.0</span>
<span class="t" style="top:819.62px;font-size:10px;line-height:10px;color:#d4d4d4;font-family:'Liberation Serif',serif;left:37.47px;transform-origin:100% 0;transform:scaleX(0.9200);">-60.0</span>
<span class="t" style="top:819.62px;font-size:10px;line-height:10px;color:#000;font-family:'Liberation Serif',serif;font-weight:bold;left:1594.00px;transform-origin:0 0;transform:scaleX(0.9200);">-60.0</span>
<span class="t" style="top:849.62px;font-size:10px;line-height:10px;color:#d4d4d4;font-family:'Liberation Serif',serif;left:37.47px;transform-origin:100% 0;transform:scaleX(0.9200);">-66.0</span>
<span class="t" style="top:849.62px;font-size:10px;line-height:10px;color:#000;font-family:'Liberation Serif',serif;font-weight:bold;left:1594.00px;transform-origin:0 0;transform:scaleX(0.9200);">-66.0</span>
<span class="t" style="top:879.62px;font-size:10px;line-height:10px;color:#d4d4d4;font-family:'Liberation Serif',serif;left:37.47px;transform-origin:100% 0;transform:scaleX(0.9200);">-72.0</span>
<span class="t" style="top:879.62px;font-size:10px;line-height:10px;color:#000;font-family:'Liberation Serif',serif;font-weight:bold;left:1594.00px;transform-origin:0 0;transform:scaleX(0.9200);">-72.0</span>
<span class="t" style="top:909.62px;font-size:10px;line-height:10px;color:#d4d4d4;font-family:'Liberation Serif',serif;left:37.47px;transform-origin:100% 0;transform:scaleX(0.9200);">-78.0</span>
<span class="t" style="top:909.62px;font-size:10px;line-height:10px;color:#000;font-family:'Liberation Serif',serif;font-weight:bold;left:1594.00px;transform-origin:0 0;transform:scaleX(0.9200);">-78.0</span>
<span class="t" style="top:939.62px;font-size:10px;line-height:10px;color:#d4d4d4;font-family:'Liberation Serif',serif;left:37.47px;transform-origin:100% 0;transform:scaleX(0.9200);">-84.0</span>
<span class="t" style="top:939.62px;font-size:10px;line-height:10px;color:#000;font-family:'Liberation Serif',serif;font-weight:bold;left:1594.00px;transform-origin:0 0;transform:scaleX(0.9200);">-84.0</span>
<span class="t" style="top:969.62px;font-size:10px;line-height:10px;color:#d4d4d4;font-family:'Liberation Serif',serif;left:37.47px;transform-origin:100% 0;transform:scaleX(0.9200);">-90.0</span>
<span class="t" style="top:969.62px;font-size:10px;line-height:10px;color:#000;font-family:'Liberation Serif',serif;font-weight:bold;left:1594.00px;transform-origin:0 0;transform:scaleX(0.9200);">-90.0</span>
<div style="left:10px;top:527px;width:52px;height:3px;overflow:hidden;"><span class="t" style="left:37px;top:-6.500px;font-size:9.300px;line-height:9.300px;color:#d4d4d4;font-family:'Liberation Serif',serif">0.0</span></div>
<div style="left:1591px;top:527px;width:30px;height:3px;overflow:hidden;"><span class="t" style="left:6px;top:-6.500px;font-size:9.300px;line-height:9.300px;color:#000;font-weight:bold;font-family:'Liberation Serif',serif">0.0</span></div>
<span class="t" style="top:527.66px;font-size:9.6px;line-height:9.6px;color:#0000ff;font-family:'Liberation Serif',serif;font-weight:bold;left:11.00px;transform-origin:0 0;transform:scaleX(1.0623);">dBr</span>
<span class="t" style="top:527.66px;font-size:9.6px;line-height:9.6px;color:#0000ff;font-family:'Liberation Serif',serif;font-weight:bold;left:1622.00px;transform-origin:0 0;transform:scaleX(1.0623);">dBr</span>
<span class="t" style="top:537.84px;font-size:12px;line-height:12px;color:#00d0ff;left:1526.00px;transform-origin:0 0;transform:scaleX(1.0374);">0.00000</span>
<span class="t" style="top:987.50px;font-size:12.4px;line-height:12.4px;color:#000;left:165.67px;transform-origin:50% 0;transform:scaleX(0.9000);">2</span>
<span class="t" style="top:987.50px;font-size:12.4px;line-height:12.4px;color:#000;left:228.09px;transform-origin:50% 0;transform:scaleX(0.9000);">3</span>
<span class="t" style="top:987.50px;font-size:12.4px;line-height:12.4px;color:#000;left:272.38px;transform-origin:50% 0;transform:scaleX(0.9000);">4</span>
<span class="t" style="top:987.50px;font-size:12.4px;line-height:12.4px;color:#000;left:306.74px;transform-origin:50% 0;transform:scaleX(0.9000);">5</span>
<span class="t" style="top:987.50px;font-size:12.4px;line-height:12.4px;color:#000;left:334.81px;transform-origin:50% 0;transform:scaleX(0.9000);">6</span>
<span class="t" style="top:987.50px;font-size:12.4px;line-height:12.4px;color:#000;left:358.54px;transform-origin:50% 0;transform:scaleX(0.9000);">7</span>
<span class="t" style="top:987.50px;font-size:12.4px;line-height:12.4px;color:#000;left:379.10px;transform-origin:50% 0;transform:scaleX(0.9000);">8</span>
<span class="t" style="top:987.50px;font-size:12.4px;line-height:12.4px;color:#000;font-weight:bold;left:410.00px;transform-origin:50% 0;transform:scaleX(0.9000);">10</span>
<span class="t" style="top:987.50px;font-size:12.4px;line-height:12.4px;color:#000;left:516.72px;transform-origin:50% 0;transform:scaleX(0.9000);">20</span>
<span class="t" style="top:987.50px;font-size:12.4px;line-height:12.4px;color:#000;left:579.14px;transform-origin:50% 0;transform:scaleX(0.9000);">30</span>
<span class="t" style="top:987.50px;font-size:12.4px;line-height:12.4px;color:#000;left:623.43px;transform-origin:50% 0;transform:scaleX(0.9000);">40</span>
<span class="t" style="top:987.50px;font-size:12.4px;line-height:12.4px;color:#000;left:657.79px;transform-origin:50% 0;transform:scaleX(0.9000);">50</span>
<span class="t" style="top:987.50px;font-size:12.4px;line-height:12.4px;color:#000;left:685.86px;transform-origin:50% 0;transform:scaleX(0.9000);">60</span>
<span class="t" style="top:987.50px;font-size:12.4px;line-height:12.4px;color:#000;left:709.59px;transform-origin:50% 0;transform:scaleX(0.9000);">70</span>
<span class="t" style="top:987.50px;font-size:12.4px;line-height:12.4px;color:#000;left:730.15px;transform-origin:50% 0;transform:scaleX(0.9000);">80</span>
<span class="t" style="top:987.50px;font-size:12.4px;line-height:12.4px;color:#000;font-weight:bold;left:761.06px;transform-origin:50% 0;transform:scaleX(0.9000);">100</span>
<span class="t" style="top:987.50px;font-size:12.4px;line-height:12.4px;color:#000;left:867.77px;transform-origin:50% 0;transform:scaleX(0.9000);">200</span>
<span class="t" style="top:987.50px;font-size:12.4px;line-height:12.4px;color:#000;left:930.19px;transform-origin:50% 0;transform:scaleX(0.9000);">300</span>
<span class="t" style="top:987.50px;font-size:12.4px;line-height:12.4px;color:#000;left:974.49px;transform-origin:50% 0;transform:scaleX(0.9000);">400</span>
<span class="t" style="top:987.50px;font-size:12.4px;line-height:12.4px;color:#000;left:1008.84px;transform-origin:50% 0;transform:scaleX(0.9000);">500</span>
<span class="t" style="top:987.50px;font-size:12.4px;line-height:12.4px;color:#000;left:1036.91px;transform-origin:50% 0;transform:scaleX(0.9000);">600</span>
<span class="t" style="top:987.50px;font-size:12.4px;line-height:12.4px;color:#000;left:1060.64px;transform-origin:50% 0;transform:scaleX(0.9000);">700</span>
<span class="t" style="top:987.50px;font-size:12.4px;line-height:12.4px;color:#000;font-weight:bold;left:1119.00px;transform-origin:50% 0;transform:scaleX(0.9000);">1k</span>
<span class="t" style="top:987.50px;font-size:12.4px;line-height:12.4px;color:#000;left:1226.07px;transform-origin:50% 0;transform:scaleX(0.9000);">2k</span>
<span class="t" style="top:987.50px;font-size:12.4px;line-height:12.4px;color:#000;left:1288.49px;transform-origin:50% 0;transform:scaleX(0.9000);">3k</span>
<span class="t" style="top:987.50px;font-size:12.4px;line-height:12.4px;color:#000;left:1332.78px;transform-origin:50% 0;transform:scaleX(0.9000);">4k</span>
<span class="t" style="top:987.50px;font-size:12.4px;line-height:12.4px;color:#000;left:1367.14px;transform-origin:50% 0;transform:scaleX(0.9000);">5k</span>
<span class="t" style="top:987.50px;font-size:12.4px;line-height:12.4px;color:#000;left:1395.21px;transform-origin:50% 0;transform:scaleX(0.9000);">6k</span>
<span class="t" style="top:987.50px;font-size:12.4px;line-height:12.4px;color:#000;left:1418.94px;transform-origin:50% 0;transform:scaleX(0.9000);">7k</span>
<span class="t" style="top:987.50px;font-size:12.4px;line-height:12.4px;color:#000;left:1439.50px;transform-origin:50% 0;transform:scaleX(0.9000);">8k</span>
<span class="t" style="top:987.50px;font-size:12.4px;line-height:12.4px;color:#000;font-weight:bold;left:1470.06px;transform-origin:50% 0;transform:scaleX(0.9000);">10k</span>
<span class="t" style="top:987.50px;font-size:12.4px;line-height:12.4px;color:#000;left:1577.12px;transform-origin:50% 0;transform:scaleX(0.9000);">20k</span>
<div style="left:1620px;top:986px;width:22px;height:20px;overflow:hidden;"><span class="t" style="left:7.500px;top:0.600px;font-size:12.300px;line-height:12.300px;color:#0000ff;font-weight:bold">Hz</span></div>
<div style="left:0px;top:1010px;width:1920px;height:22px;background:#f0eeed;border-top:1px solid #a8a8a8;border-bottom:1px solid #fff;"></div>
<div style="left:0px;top:1011px;width:1920px;height:1px;background:#fff;"></div>
<span class="t" style="top:1015.15px;font-size:14px;line-height:14px;color:#000;font-style:italic;left:3.00px;transform-origin:0 0;transform:scaleX(1.0555);">[Points = 4096]</span>
<span class="t" style="top:1015.15px;font-size:14px;line-height:14px;color:#000;font-style:italic;left:111.00px;transform-origin:0 0;transform:scaleX(1.0496);">[Sampling = 40960Hz]</span>
<span class="t" style="top:1015.15px;font-size:14px;line-height:14px;color:#000;font-style:italic;left:265.00px;transform-origin:0 0;transform:scaleX(1.0573);">[Smoothing = Hanning]</span>
<span class="t" style="top:1015.15px;font-size:14px;line-height:14px;color:#000;font-style:italic;left:425.00px;transform-origin:0 0;transform:scaleX(1.0435);">[Ini = C:\Program Files (x86)\Visual Analyser\VA.ini]</span>
<span class="t" style="top:1015.15px;font-size:14px;line-height:14px;color:#000;font-style:italic;left:767.50px;transform-origin:0 0;transform:scaleX(0.9604);">[UID = 9E82FBF60AF4DDFEFD6F22568A4EE6CE]</span>
<div class="grp" style="left:1533px;top:58px;width:182px;height:460px;"></div>
<div style="left:1539px;top:52px;width:47px;height:12px;background:#f0f0f0;"></div>
<span class="t" style="top:52.07px;font-size:13.5px;line-height:13.5px;color:#000;left:1541.00px;transform-origin:0 0;transform:scaleX(0.9395);">Ch A(L)</span>
<span class="t" style="top:67.07px;font-size:13.5px;line-height:13.5px;color:#000;left:1535.00px;transform-origin:0 0;transform:scaleX(1.0170);">Vpos Trig</span>
<div class="btn" style="left:1603px;top:71.5px;width:20px;height:15.5px;"></div>
<span class="t" style="top:74.49px;font-size:12px;line-height:12px;color:#000;left:1609.66px;transform-origin:50% 0;">0</span>
<span class="t" style="top:71.57px;font-size:13.5px;line-height:13.5px;color:#000;left:1651.00px;transform-origin:0 0;transform:scaleX(1.0255);">ms/d</span>
<div style="left:1602px;top:89px;width:59px;height:20px;border:1px solid #b5b9be;background:#f0f0f0;border-radius:2px;box-shadow:inset 0 0 0 1px #fafafa;"></div>
<span class="t" style="top:93.22px;font-size:12.5px;line-height:12.5px;color:#000;left:1605.00px;transform-origin:0 0;transform:scaleX(0.8893);">3.4790</span>
<div style="left:1663px;top:90.0px;width:19px;height:12.0px;border:1px solid #aab0b6;background:linear-gradient(#f7f7f7,#e9e9e9);border-radius:2px;"></div>
<div style="left:1663px;top:102.0px;width:19px;height:12.0px;border:1px solid #aab0b6;background:linear-gradient(#f7f7f7,#e9e9e9);border-radius:2px;"></div>
<svg style="left:1663px;top:90px" width="19" height="24" viewBox="0 0 19 24" >
<path d="M6.0 9.5 h7 l-3.500 -4z" fill="#3c55a8"/><path d="M6.0 15.0 h7 l-3.500 4z" fill="#3c55a8"/>
</svg>
<span class="t" style="top:124.57px;font-size:13.5px;line-height:13.5px;color:#000;left:1602.00px;transform-origin:0 0;transform:scaleX(0.9852);">Zoom</span>
<span class="t" style="top:143.38px;font-size:9px;line-height:9px;color:#000;left:1592.00px;transform-origin:0 0;">x</span>
<div style="left:1602px;top:137px;width:59px;height:23px;border:1px solid #b5b9be;background:#f0f0f0;border-radius:2px;box-shadow:inset 0 0 0 1px #fafafa;"></div>
<span class="t" style="top:141.87px;font-size:13.5px;line-height:13.5px;color:#000;left:1605.00px;transform-origin:0 0;">1</span>
<div style="left:1663px;top:138.0px;width:18px;height:11.0px;border:1px solid #aab0b6;background:linear-gradient(#f7f7f7,#e9e9e9);border-radius:2px;"></div>
<div style="left:1663px;top:149.0px;width:18px;height:11.0px;border:1px solid #aab0b6;background:linear-gradient(#f7f7f7,#e9e9e9);border-radius:2px;"></div>
<svg style="left:1663px;top:138px" width="18" height="22" viewBox="0 0 18 22" >
<path d="M5.5 8.5 h7 l-3.500 -4z" fill="#3c55a8"/><path d="M5.5 14.0 h7 l-3.500 4z" fill="#3c55a8"/>
</svg>
<div style="left:1593px;top:178px;width:16px;height:16px;border:1px solid #8e8f8f;background:linear-gradient(135deg,#cfd3d7 10%,#f4f5f6 90%);box-shadow:inset 0 0 0 1px #f4f4f4,inset 0 0 0 2px #b4b8bb;"></div>
<span class="t" style="top:179.57px;font-size:13.5px;line-height:13.5px;color:#000;left:1612.00px;transform-origin:0 0;transform:scaleX(1.0330);">Trig</span>
<div style="left:1643px;top:178px;width:16px;height:16px;border:1px solid #8e8f8f;background:linear-gradient(135deg,#cfd3d7 10%,#f4f5f6 90%);box-shadow:inset 0 0 0 1px #f4f4f4,inset 0 0 0 2px #b4b8bb;"></div>
<span class="t" style="top:179.57px;font-size:13.5px;line-height:13.5px;color:#000;left:1662.00px;transform-origin:0 0;">Inv</span>
<div class="grp" style="left:1592px;top:207px;width:89px;height:120px;"></div>
<div style="left:1598px;top:201px;width:48px;height:12px;background:#f0f0f0;"></div>
<span class="t" style="top:200.07px;font-size:13.5px;line-height:13.5px;color:#000;left:1600.00px;transform-origin:0 0;transform:scaleX(1.0411);">Trigger</span>
<span class="t" style="top:217.57px;font-size:13.5px;line-height:13.5px;color:#a6a6a6;left:1612.00px;transform-origin:0 0;transform:scaleX(1.0136);">Slope</span>
<div style="left:1599px;top:234.5px;width:15px;height:15px;border:1px solid #a2a2a2;border-radius:50%;background:radial-gradient(circle at 50% 50%,#f8f8f8 40%,#dcdcdc 100%);"></div>
<div style="left:1603px;top:238.5px;width:7px;height:7px;border-radius:50%;background:radial-gradient(circle at 40% 35%,#d8d8d8,#8d8d8d);"></div>
<span class="t" style="top:235.57px;font-size:13.5px;line-height:13.5px;color:#858585;left:1618.00px;transform-origin:0 0;transform:scaleX(0.9943);">Positive</span>
<div style="left:1599px;top:254.5px;width:15px;height:15px;border:1px solid #a2a2a2;border-radius:50%;background:radial-gradient(circle at 50% 50%,#f8f8f8 40%,#dcdcdc 100%);"></div>
<span class="t" style="top:255.57px;font-size:13.5px;line-height:13.5px;color:#858585;left:1618.00px;transform-origin:0 0;transform:scaleX(1.0135);">Negative</span>
<span class="t" style="top:279.04px;font-size:9.5px;line-height:9.5px;color:#8c8c8c;font-family:'Liberation Serif',serif;left:1602.00px;transform-origin:0 0;transform:scaleX(0.9858);">Delta Th %</span>
<div style="left:1602px;top:293px;width:49px;height:23px;border:1px solid #c3c6ca;background:#f0f0f0;border-radius:2px;box-shadow:inset 0 0 0 1px #fafafa;"></div>
<span class="t" style="top:297.87px;font-size:13.5px;line-height:13.5px;color:#858585;left:1605.00px;transform-origin:0 0;">25</span>
<div style="left:1653px;top:294.0px;width:18px;height:11.0px;border:1px solid #c0c4c8;background:linear-gradient(#f7f7f7,#e9e9e9);border-radius:2px;"></div>
<div style="left:1653px;top:305.0px;width:18px;height:11.0px;border:1px solid #c0c4c8;background:linear-gradient(#f7f7f7,#e9e9e9);border-radius:2px;"></div>
<svg style="left:1653px;top:294px" width="18" height="22" viewBox="0 0 18 22" >
<path d="M5.5 8.5 h7 l-3.500 -4z" fill="#b8b8b8"/><path d="M5.5 14.0 h7 l-3.500 4z" fill="#b8b8b8"/>
</svg>
<div style="left:1591px;top:331px;width:16px;height:16px;border:1px solid #8e8f8f;background:linear-gradient(135deg,#cfd3d7 10%,#f4f5f6 90%);box-shadow:inset 0 0 0 1px #f4f4f4,inset 0 0 0 2px #b4b8bb;"></div>
<span class="t" style="top:330.57px;font-size:13.5px;line-height:13.5px;color:#000;left:1610.00px;transform-origin:0 0;transform:scaleX(0.8887);">D/A</span>
<div style="left:1591px;top:349.9px;width:16px;height:16px;border:1px solid #8e8f8f;background:linear-gradient(135deg,#cfd3d7 10%,#f4f5f6 90%);box-shadow:inset 0 0 0 1px #f4f4f4,inset 0 0 0 2px #b4b8bb;"></div>
<span class="t" style="top:350.74px;font-size:12px;line-height:12px;color:#000;left:1610.00px;transform-origin:0 0;transform:scaleX(0.8665);">DCremoval</span>
<div style="left:1591px;top:368.79999999999995px;width:16px;height:16px;border:1px solid #8e8f8f;background:linear-gradient(135deg,#cfd3d7 10%,#f4f5f6 90%);box-shadow:inset 0 0 0 1px #f4f4f4,inset 0 0 0 2px #b4b8bb;"></div>
<span class="t" style="top:368.37px;font-size:13.5px;line-height:13.5px;color:#000;left:1610.00px;transform-origin:0 0;transform:scaleX(1.0428);">Values</span>
<div style="left:1547px;top:85px;width:6px;height:390px;background:#e9ecec;border-left:1px solid #a9adaf;border-right:1px solid #fdfdfd;border-top:1px solid #a9adaf;"></div>
<div style="left:1545px;top:278px;width:10px;height:5px;background:#efefef;border:1px solid #9c9c9c;border-radius:2px;"></div>
<div style="left:1570px;top:85px;width:6px;height:390px;background:#e9ecec;border-left:1px solid #a9adaf;border-right:1px solid #fdfdfd;border-top:1px solid #a9adaf;"></div>
<div style="left:1568px;top:85px;width:10px;height:5px;background:#efefef;border:1px solid #9c9c9c;border-radius:2px;"></div>
<div style="left:1691px;top:71px;width:14px;height:418px;background:linear-gradient(90deg,#f2f2f2 0%,#e6e6e6 20%,#dddddd 54%,#d0d0d0 57%,#d6d6d6 100%);border:1px solid #a6a6a6;border-radius:2px;"></div>
<div style="left:1692px;top:468px;width:12px;height:21px;background:linear-gradient(90deg,#c8f8d0 0%,#a8eeb4 54%,#0cc82c 58%,#14e034 82%,#10c830 100%);border-radius:0 0 2px 2px;"></div>
<div class="btn" style="left:1544px;top:485px;width:19px;height:19px;"></div>
<span class="t" style="top:489.74px;font-size:12px;line-height:12px;color:#000;left:1550.16px;transform-origin:50% 0;">0</span>
<span class="t" style="top:492.57px;font-size:13.5px;line-height:13.5px;color:#000;left:1648.21px;transform-origin:100% 0;transform:scaleX(0.9490);">-26.08dB</span>
<div class="grp" style="left:1722px;top:58px;width:182px;height:460px;"></div>
<div style="left:1728px;top:52px;width:47px;height:12px;background:#f0f0f0;"></div>
<span class="t" style="top:52.07px;font-size:13.5px;line-height:13.5px;color:#000;left:1730.00px;transform-origin:0 0;transform:scaleX(0.8820);">Ch B(R)</span>
<span class="t" style="top:67.07px;font-size:13.5px;line-height:13.5px;color:#adadad;left:1724.00px;transform-origin:0 0;transform:scaleX(1.0170);">Vpos Trig</span>
<div class="btnd" style="left:1792px;top:71.5px;width:20px;height:15.5px;"></div>
<span class="t" style="top:74.49px;font-size:12px;line-height:12px;color:#9a9a9a;left:1798.66px;transform-origin:50% 0;">0</span>
<span class="t" style="top:71.57px;font-size:13.5px;line-height:13.5px;color:#adadad;left:1840.00px;transform-origin:0 0;transform:scaleX(1.0255);">ms/d</span>
<div style="left:1791px;top:89px;width:59px;height:20px;border:1px solid #c3c6ca;background:#f0f0f0;border-radius:2px;box-shadow:inset 0 0 0 1px #fafafa;"></div>
<span class="t" style="top:93.22px;font-size:12.5px;line-height:12.5px;color:#858585;left:1794.00px;transform-origin:0 0;transform:scaleX(0.8893);">3.4790</span>
<div style="left:1852px;top:90.0px;width:19px;height:12.0px;border:1px solid #c0c4c8;background:linear-gradient(#f7f7f7,#e9e9e9);border-radius:2px;"></div>
<div style="left:1852px;top:102.0px;width:19px;height:12.0px;border:1px solid #c0c4c8;background:linear-gradient(#f7f7f7,#e9e9e9);border-radius:2px;"></div>
<svg style="left:1852px;top:90px" width="19" height="24" viewBox="0 0 19 24" >
<path d="M6.0 9.5 h7 l-3.500 -4z" fill="#b8b8b8"/><path d="M6.0 15.0 h7 l-3.500 4z" fill="#b8b8b8"/>
</svg>
<span class="t" style="top:124.57px;font-size:13.5px;line-height:13.5px;color:#adadad;left:1791.00px;transform-origin:0 0;transform:scaleX(0.9852);">Zoom</span>
<span class="t" style="top:143.38px;font-size:9px;line-height:9px;color:#adadad;left:1781.00px;transform-origin:0 0;">x</span>
<div style="left:1791px;top:137px;width:59px;height:23px;border:1px solid #c3c6ca;background:#f0f0f0;border-radius:2px;box-shadow:inset 0 0 0 1px #fafafa;"></div>
<span class="t" style="top:141.87px;font-size:13.5px;line-height:13.5px;color:#858585;left:1794.00px;transform-origin:0 0;">1</span>
<div style="left:1852px;top:138.0px;width:18px;height:11.0px;border:1px solid #c0c4c8;background:linear-gradient(#f7f7f7,#e9e9e9);border-radius:2px;"></div>
<div style="left:1852px;top:149.0px;width:18px;height:11.0px;border:1px solid #c0c4c8;background:linear-gradient(#f7f7f7,#e9e9e9);border-radius:2px;"></div>
<svg style="left:1852px;top:138px" width="18" height="22" viewBox="0 0 18 22" >
<path d="M5.5 8.5 h7 l-3.500 -4z" fill="#b8b8b8"/><path d="M5.5 14.0 h7 l-3.500 4z" fill="#b8b8b8"/>
</svg>
<div style="left:1780px;top:178px;width:16px;height:16px;border:1px solid #b4b4b4;background:#f6f6f6;box-shadow:inset 0 0 0 1px #fbfbfb,inset 0 0 0 2px #e2e2e2;"></div>
<span class="t" style="top:179.57px;font-size:13.5px;line-height:13.5px;color:#8c8c8c;left:1800.00px;transform-origin:0 0;transform:scaleX(1.0330);">Trig</span>
<div style="left:1832px;top:178px;width:16px;height:16px;border:1px solid #b4b4b4;background:#f6f6f6;box-shadow:inset 0 0 0 1px #fbfbfb,inset 0 0 0 2px #e2e2e2;"></div>
<span class="t" style="top:179.57px;font-size:13.5px;line-height:13.5px;color:#8c8c8c;left:1851.00px;transform-origin:0 0;">Inv</span>
<div class="grp" style="left:1781px;top:207px;width:89px;height:120px;"></div>
<div style="left:1787px;top:201px;width:48px;height:12px;background:#f0f0f0;"></div>
<span class="t" style="top:200.07px;font-size:13.5px;line-height:13.5px;color:#000;left:1789.00px;transform-origin:0 0;transform:scaleX(1.0411);">Trigger</span>
<span class="t" style="top:217.57px;font-size:13.5px;line-height:13.5px;color:#a6a6a6;left:1801.00px;transform-origin:0 0;transform:scaleX(1.0136);">Slope</span>
<div style="left:1788px;top:234.5px;width:15px;height:15px;border:1px solid #a2a2a2;border-radius:50%;background:radial-gradient(circle at 50% 50%,#f8f8f8 40%,#dcdcdc 100%);"></div>
<div style="left:1792px;top:238.5px;width:7px;height:7px;border-radius:50%;background:radial-gradient(circle at 40% 35%,#d8d8d8,#8d8d8d);"></div>
<span class="t" style="top:235.57px;font-size:13.5px;line-height:13.5px;color:#858585;left:1807.00px;transform-origin:0 0;transform:scaleX(0.9943);">Positive</span>
<div style="left:1788px;top:254.5px;width:15px;height:15px;border:1px solid #a2a2a2;border-radius:50%;background:radial-gradient(circle at 50% 50%,#f8f8f8 40%,#dcdcdc 100%);"></div>
<span class="t" style="top:255.57px;font-size:13.5px;line-height:13.5px;color:#858585;left:1807.00px;transform-origin:0 0;transform:scaleX(1.0135);">Negative</span>
<span class="t" style="top:279.04px;font-size:9.5px;line-height:9.5px;color:#8c8c8c;font-family:'Liberation Serif',serif;left:1791.00px;transform-origin:0 0;transform:scaleX(0.9858);">Delta Th %</span>
<div style="left:1791px;top:293px;width:49px;height:23px;border:1px solid #c3c6ca;background:#f0f0f0;border-radius:2px;box-shadow:inset 0 0 0 1px #fafafa;"></div>
<span class="t" style="top:297.87px;font-size:13.5px;line-height:13.5px;color:#858585;left:1794.00px;transform-origin:0 0;">25</span>
<div style="left:1842px;top:294.0px;width:18px;height:11.0px;border:1px solid #c0c4c8;background:linear-gradient(#f7f7f7,#e9e9e9);border-radius:2px;"></div>
<div style="left:1842px;top:305.0px;width:18px;height:11.0px;border:1px solid #c0c4c8;background:linear-gradient(#f7f7f7,#e9e9e9);border-radius:2px;"></div>
<svg style="left:1842px;top:294px" width="18" height="22" viewBox="0 0 18 22" >
<path d="M5.5 8.5 h7 l-3.500 -4z" fill="#b8b8b8"/><path d="M5.5 14.0 h7 l-3.500 4z" fill="#b8b8b8"/>
</svg>
<div style="left:1780px;top:331px;width:16px;height:16px;border:1px solid #b4b4b4;background:#f6f6f6;box-shadow:inset 0 0 0 1px #fbfbfb,inset 0 0 0 2px #e2e2e2;"></div>
<span class="t" style="top:330.57px;font-size:13.5px;line-height:13.5px;color:#8c8c8c;left:1799.00px;transform-origin:0 0;transform:scaleX(0.8887);">D/A</span>
<div style="left:1780px;top:349.9px;width:16px;height:16px;border:1px solid #b4b4b4;background:#f6f6f6;box-shadow:inset 0 0 0 1px #fbfbfb,inset 0 0 0 2px #e2e2e2;"></div>
<span class="t" style="top:350.74px;font-size:12px;line-height:12px;color:#8c8c8c;left:1799.00px;transform-origin:0 0;transform:scaleX(0.8665);">DCremoval</span>
<div style="left:1780px;top:368.79999999999995px;width:16px;height:16px;border:1px solid #b4b4b4;background:#f6f6f6;box-shadow:inset 0 0 0 1px #fbfbfb,inset 0 0 0 2px #e2e2e2;"></div>
<span class="t" style="top:368.37px;font-size:13.5px;line-height:13.5px;color:#8c8c8c;left:1799.00px;transform-origin:0 0;transform:scaleX(0.9886);">Trig left</span>
<div style="left:1780px;top:387.69999999999993px;width:16px;height:16px;border:1px solid #b4b4b4;background:#f6f6f6;box-shadow:inset 0 0 0 1px #fbfbfb,inset 0 0 0 2px #e2e2e2;"></div>
<span class="t" style="top:387.27px;font-size:13.5px;line-height:13.5px;color:#8c8c8c;left:1799.00px;transform-origin:0 0;transform:scaleX(1.0428);">Values</span>
<div style="left:1736px;top:85px;width:6px;height:390px;background:#e9ecec;border-left:1px solid #a9adaf;border-right:1px solid #fdfdfd;border-top:1px solid #a9adaf;"></div>
<div style="left:1734px;top:278px;width:10px;height:5px;background:#efefef;border:1px solid #9c9c9c;border-radius:2px;"></div>
<div style="left:1759px;top:85px;width:6px;height:390px;background:#e9ecec;border-left:1px solid #a9adaf;border-right:1px solid #fdfdfd;border-top:1px solid #a9adaf;"></div>
<div style="left:1757px;top:85px;width:10px;height:5px;background:#efefef;border:1px solid #9c9c9c;border-radius:2px;"></div>
<div style="left:1880px;top:71px;width:14px;height:418px;background:linear-gradient(90deg,#f2f2f2 0%,#e6e6e6 20%,#dddddd 54%,#d0d0d0 57%,#d6d6d6 100%);border:1px solid #a6a6a6;border-radius:2px;"></div>
<div class="btnd" style="left:1733px;top:485px;width:19px;height:19px;"></div>
<span class="t" style="top:489.74px;font-size:12px;line-height:12px;color:#9a9a9a;left:1739.16px;transform-origin:50% 0;">0</span>
<span class="t" style="top:492.57px;font-size:13.5px;line-height:13.5px;color:#a6a6a6;left:1852.98px;transform-origin:100% 0;transform:scaleX(0.9739);">-inf dB</span>
<div style="left:1649px;top:547px;width:266px;height:406px;background:#fff;border:1px solid #898c95;"></div>
<div style="left:1706px;top:527px;width:54px;height:21px;border:1px solid #898c95;border-bottom:none;background:linear-gradient(#f2f2f2 0%,#ebebeb 50%,#dddddd 50%,#cfcfcf 100%);"></div>
<div style="left:1759px;top:527px;width:55px;height:21px;border:1px solid #898c95;border-bottom:none;background:linear-gradient(#f2f2f2 0%,#ebebeb 50%,#dddddd 50%,#cfcfcf 100%);"></div>
<div style="left:1813px;top:527px;width:54px;height:21px;border:1px solid #898c95;border-bottom:none;background:linear-gradient(#f2f2f2 0%,#ebebeb 50%,#dddddd 50%,#cfcfcf 100%);"></div>
<div style="left:1866px;top:527px;width:15px;height:21px;border:1px solid #898c95;border-bottom:none;background:linear-gradient(#f2f2f2 0%,#ebebeb 50%,#dddddd 50%,#cfcfcf 100%);border-right:none;"></div>
<span class="t" style="top:530.57px;font-size:13.5px;line-height:13.5px;color:#000;left:1711.00px;transform-origin:0 0;transform:scaleX(0.9753);">More</span>
<span class="t" style="top:530.57px;font-size:13.5px;line-height:13.5px;color:#000;left:1765.00px;transform-origin:0 0;transform:scaleX(0.9924);">Cepst</span>
<span class="t" style="top:530.57px;font-size:13.5px;line-height:13.5px;color:#000;left:1819.00px;transform-origin:0 0;transform:scaleX(1.0092);">THD</span>
<div style="left:1867px;top:529px;width:12px;height:18px;overflow:hidden;"><span class="t" style="left:6px;top:2px;font-size:13.5px;line-height:13.5px">U</span></div>
<div style="left:1650px;top:524px;width:57px;height:25px;background:#fff;border:1px solid #898c95;border-bottom:none;"></div>
<span class="t" style="top:528.57px;font-size:13.5px;line-height:13.5px;color:#000;left:1657.50px;transform-origin:0 0;transform:scaleX(0.9569);">Main</span>
<div style="left:1879px;top:527px;width:18px;height:18px;border:1px solid #b8bcc0;background:linear-gradient(#fafafa,#e9e9e9);border-radius:2px;"></div>
<svg style="left:1879px;top:527px" width="18" height="18" viewBox="0 0 18 18" >
<path d="M11 5.500 v7 l-4.500 -3.500z" fill="#3c55a8"/>
</svg>
<div style="left:1897px;top:527px;width:18px;height:18px;border:1px solid #b8bcc0;background:linear-gradient(#fafafa,#e9e9e9);border-radius:2px;"></div>
<svg style="left:1897px;top:527px" width="18" height="18" viewBox="0 0 18 18" >
<path d="M7 5.500 v7 l4.500 -3.500z" fill="#3c55a8"/>
</svg>
<div class="grp" style="left:1653px;top:551px;width:139px;height:184px;background:#fff;"></div>
<div style="left:1663px;top:556px;width:16px;height:16px;border:1px solid #8e8f8f;background:linear-gradient(135deg,#cfd3d7 10%,#f4f5f6 90%);box-shadow:inset 0 0 0 1px #f4f4f4,inset 0 0 0 2px #b4b8bb;"></div>
<span class="t" style="top:557.57px;font-size:13.5px;line-height:13.5px;color:#000;left:1682.00px;transform-origin:0 0;transform:scaleX(0.9663);">Stay on top</span>
<div style="left:1663px;top:575px;width:16px;height:16px;border:1px solid #8e8f8f;background:linear-gradient(135deg,#cfd3d7 10%,#f4f5f6 90%);box-shadow:inset 0 0 0 1px #f4f4f4,inset 0 0 0 2px #b4b8bb;"></div>
<svg style="left:1663px;top:575px" width="16" height="16" viewBox="0 0 16 16" >
<path d="M3.800 8.200 L6.200 12.300 L12.200 3.200" stroke="#3a4f9c" stroke-width="2.2" fill="none"/>
</svg>
<span class="t" style="top:576.57px;font-size:13.5px;line-height:13.5px;color:#000;left:1682.00px;transform-origin:0 0;transform:scaleX(0.9872);">Volt meter</span>
<div style="left:1663px;top:595px;width:16px;height:16px;border:1px solid #8e8f8f;background:linear-gradient(135deg,#cfd3d7 10%,#f4f5f6 90%);box-shadow:inset 0 0 0 1px #f4f4f4,inset 0 0 0 2px #b4b8bb;"></div>
<span class="t" style="top:596.57px;font-size:13.5px;line-height:13.5px;color:#000;left:1682.00px;transform-origin:0 0;transform:scaleX(0.9746);">Freq. meter</span>
<div style="left:1663px;top:615px;width:16px;height:16px;border:1px solid #8e8f8f;background:linear-gradient(135deg,#cfd3d7 10%,#f4f5f6 90%);box-shadow:inset 0 0 0 1px #f4f4f4,inset 0 0 0 2px #b4b8bb;"></div>
<span class="t" style="top:616.57px;font-size:13.5px;line-height:13.5px;color:#000;left:1682.00px;transform-origin:0 0;transform:scaleX(1.0128);">Wave Gen./Rec</span>
<div style="left:1663px;top:636px;width:16px;height:16px;border:1px solid #8e8f8f;background:linear-gradient(135deg,#cfd3d7 10%,#f4f5f6 90%);box-shadow:inset 0 0 0 1px #f4f4f4,inset 0 0 0 2px #b4b8bb;"></div>
<span class="t" style="top:637.57px;font-size:13.5px;line-height:13.5px;color:#000;left:1682.00px;transform-origin:0 0;transform:scaleX(0.9927);">Phase</span>
<div style="left:1663px;top:654px;width:16px;height:16px;border:1px solid #8e8f8f;background:linear-gradient(135deg,#cfd3d7 10%,#f4f5f6 90%);box-shadow:inset 0 0 0 1px #f4f4f4,inset 0 0 0 2px #b4b8bb;"></div>
<span class="t" style="top:655.57px;font-size:13.5px;line-height:13.5px;color:#000;left:1682.00px;transform-origin:0 0;transform:scaleX(0.9914);">THD view</span>
<div style="left:1663px;top:674px;width:16px;height:16px;border:1px solid #8e8f8f;background:linear-gradient(135deg,#cfd3d7 10%,#f4f5f6 90%);box-shadow:inset 0 0 0 1px #f4f4f4,inset 0 0 0 2px #b4b8bb;"></div>
<span class="t" style="top:675.57px;font-size:13.5px;line-height:13.5px;color:#000;left:1682.00px;transform-origin:0 0;transform:scaleX(1.0109);">THD+Noise view</span>
<div style="left:1663px;top:694px;width:16px;height:16px;border:1px solid #8e8f8f;background:linear-gradient(135deg,#cfd3d7 10%,#f4f5f6 90%);box-shadow:inset 0 0 0 1px #f4f4f4,inset 0 0 0 2px #b4b8bb;"></div>
<span class="t" style="top:695.57px;font-size:13.5px;line-height:13.5px;color:#000;left:1682.00px;transform-origin:0 0;transform:scaleX(0.9522);">ZRLC meter</span>
<div style="left:1663px;top:713px;width:16px;height:16px;border:1px solid #8e8f8f;background:linear-gradient(135deg,#cfd3d7 10%,#f4f5f6 90%);box-shadow:inset 0 0 0 1px #f4f4f4,inset 0 0 0 2px #b4b8bb;"></div>
<span class="t" style="top:714.57px;font-size:13.5px;line-height:13.5px;color:#000;left:1682.00px;transform-origin:0 0;">Fast Rec./Play</span>
<div class="btn" style="left:1802px;top:558px;width:107px;height:19px;"></div>
<span class="t" style="top:561.47px;font-size:13.5px;line-height:13.5px;color:#000;left:1811.60px;transform-origin:50% 0;transform:scaleX(0.9908);">Capture scope</span>
<div class="btn" style="left:1802px;top:582px;width:107px;height:18px;"></div>
<span class="t" style="top:584.97px;font-size:13.5px;line-height:13.5px;color:#000;left:1801.85px;transform-origin:50% 0;transform:scaleX(0.9599);">Capture spectrum</span>
<div class="btn" style="left:1800px;top:604px;width:71px;height:19px;"></div>
<span class="t" style="top:607.47px;font-size:13.5px;line-height:13.5px;color:#000;left:1809.49px;transform-origin:50% 0;">WaveOn</span>
<div class="btn" style="left:1876px;top:604px;width:33px;height:19px;"></div>
<span class="t" style="top:607.47px;font-size:13.5px;line-height:13.5px;color:#000;left:1881.24px;transform-origin:50% 0;transform:scaleX(0.8882);">Info</span>
<div class="grp" style="left:1801px;top:630px;width:109px;height:105px;background:#fff;"></div>
<span class="t" style="top:646.37px;font-size:13.5px;line-height:13.5px;color:#000;left:1822.00px;transform-origin:0 0;transform:scaleX(0.9580);">wait</span>
<div style="left:1860px;top:642px;width:41px;height:24px;border:1px solid #d9dde2;background:#f0f0f0;border-radius:2px;box-shadow:inset 0 0 0 1px #fafafa;"></div>
<span class="t" style="top:647.02px;font-size:12.5px;line-height:12.5px;color:#000;left:1863.00px;transform-origin:0 0;">94</span>
<span class="t" style="top:675.07px;font-size:13.5px;line-height:13.5px;color:#000;left:1822.00px;transform-origin:0 0;transform:scaleX(0.9457);">req.</span>
<div style="left:1860px;top:671px;width:41px;height:24px;border:1px solid #d9dde2;background:#f0f0f0;border-radius:2px;box-shadow:inset 0 0 0 1px #fafafa;"></div>
<span class="t" style="top:676.12px;font-size:12.5px;line-height:12.5px;color:#000;left:1863.00px;transform-origin:0 0;">-1</span>
<span class="t" style="top:704.87px;font-size:13.5px;line-height:13.5px;color:#000;left:1822.00px;transform-origin:0 0;transform:scaleX(0.9906);">used</span>
<div style="left:1860px;top:699px;width:41px;height:24px;border:1px solid #d9dde2;background:#f0f0f0;border-radius:2px;box-shadow:inset 0 0 0 1px #fafafa;"></div>
<span class="t" style="top:703.82px;font-size:12.5px;line-height:12.5px;color:#000;left:1863.00px;transform-origin:0 0;">0</span>
<div class="grp" style="left:1653px;top:744px;width:139px;height:187px;background:#fff;"></div>
<div style="left:1659px;top:738px;width:46px;height:12px;background:#fff;"></div>
<span class="t" style="top:737.57px;font-size:13.5px;line-height:13.5px;color:#000;left:1661.00px;transform-origin:0 0;transform:scaleX(0.9382);">Y - axis</span>
<div style="left:1676px;top:762px;width:8px;height:137px;background:linear-gradient(90deg,#d2d5d7,#eceeee 40%,#e3e5e6);border-radius:1px;"></div>
<div style="left:1668px;top:766px;width:3px;height:1px;background:#c9c9c9;"></div>
<div style="left:1689px;top:766px;width:3px;height:1px;background:#c9c9c9;"></div>
<div style="left:1668px;top:782px;width:3px;height:1px;background:#c9c9c9;"></div>
<div style="left:1689px;top:782px;width:3px;height:1px;background:#c9c9c9;"></div>
<div style="left:1668px;top:800px;width:3px;height:1px;background:#c9c9c9;"></div>
<div style="left:1689px;top:800px;width:3px;height:1px;background:#c9c9c9;"></div>
<div style="left:1668px;top:818px;width:3px;height:1px;background:#c9c9c9;"></div>
<div style="left:1689px;top:818px;width:3px;height:1px;background:#c9c9c9;"></div>
<div style="left:1668px;top:835px;width:3px;height:1px;background:#c9c9c9;"></div>
<div style="left:1689px;top:835px;width:3px;height:1px;background:#c9c9c9;"></div>
<div style="left:1668px;top:852px;width:3px;height:1px;background:#c9c9c9;"></div>
<div style="left:1689px;top:852px;width:3px;height:1px;background:#c9c9c9;"></div>
<div style="left:1668px;top:870px;width:3px;height:1px;background:#c9c9c9;"></div>
<div style="left:1689px;top:870px;width:3px;height:1px;background:#c9c9c9;"></div>
<div style="left:1668px;top:888px;width:3px;height:1px;background:#c9c9c9;"></div>
<div style="left:1689px;top:888px;width:3px;height:1px;background:#c9c9c9;"></div>
<div style="left:1668px;top:896px;width:3px;height:1px;background:#c9c9c9;"></div>
<div style="left:1689px;top:896px;width:3px;height:1px;background:#c9c9c9;"></div>
<div style="left:1673px;top:805px;width:14px;height:6px;background:linear-gradient(#fdfdfd,#d9d9d9);border:1px solid #8a8a8a;border-radius:2px;"></div>
<div class="btn" style="left:1664px;top:907px;width:38px;height:16px;"></div>
<span class="t" style="top:908.97px;font-size:13.5px;line-height:13.5px;color:#000;left:1669.11px;transform-origin:50% 0;transform:scaleX(0.9362);">Auto</span>
<div style="left:1722px;top:752px;width:16px;height:16px;border:1px solid #8e8f8f;background:linear-gradient(135deg,#cfd3d7 10%,#f4f5f6 90%);box-shadow:inset 0 0 0 1px #f4f4f4,inset 0 0 0 2px #b4b8bb;"></div>
<svg style="left:1722px;top:752px" width="16" height="16" viewBox="0 0 16 16" >
<path d="M3.800 8.200 L6.200 12.300 L12.200 3.200" stroke="#3a4f9c" stroke-width="2.2" fill="none"/>
</svg>
<span class="t" style="top:753.57px;font-size:13.5px;line-height:13.5px;color:#000;left:1741.00px;transform-origin:0 0;transform:scaleX(1.0211);">Log</span>
<div style="left:1722px;top:775px;width:16px;height:16px;border:1px solid #8e8f8f;background:linear-gradient(135deg,#cfd3d7 10%,#f4f5f6 90%);box-shadow:inset 0 0 0 1px #f4f4f4,inset 0 0 0 2px #b4b8bb;"></div>
<span class="t" style="top:776.57px;font-size:13.5px;line-height:13.5px;color:#000;left:1741.00px;transform-origin:0 0;transform:scaleX(1.0445);">Hold</span>
<div style="left:1722px;top:798px;width:16px;height:16px;border:1px solid #b4b4b4;background:#f6f6f6;box-shadow:inset 0 0 0 1px #fbfbfb,inset 0 0 0 2px #e2e2e2;"></div>
<svg style="left:1722px;top:798px" width="16" height="16" viewBox="0 0 16 16" >
<path d="M3.800 8.200 L6.200 12.300 L12.200 3.200" stroke="#c4c4c4" stroke-width="2.2" fill="none"/>
</svg>
<span class="t" style="top:799.57px;font-size:13.5px;line-height:13.5px;color:#8e8e8e;left:1741.00px;transform-origin:0 0;transform:scaleX(0.9915);">Lines</span>
<div style="left:1722px;top:819px;width:16px;height:16px;border:1px solid #8e8f8f;background:linear-gradient(135deg,#cfd3d7 10%,#f4f5f6 90%);box-shadow:inset 0 0 0 1px #f4f4f4,inset 0 0 0 2px #b4b8bb;"></div>
<span class="t" style="top:820.57px;font-size:13.5px;line-height:13.5px;color:#000;left:1741.00px;transform-origin:0 0;transform:scaleX(0.9326);">Info</span>
<span class="t" style="top:839.07px;font-size:13.5px;line-height:13.5px;color:#000;left:1712.00px;transform-origin:0 0;transform:scaleX(1.0392);">Average</span>
<div class="btn" style="left:1712px;top:854px;width:70px;height:24px;"></div>
<span class="t" style="top:859.37px;font-size:13.5px;line-height:13.5px;color:#000;left:1716.00px;transform-origin:0 0;">1</span>
<svg style="left:1766px;top:863.0px" width="11" height="7" viewBox="0 0 11 7" >
<path d="M0.500 0.500 h9 l-4.500 5z" fill="#000"/>
</svg>
<span class="t" style="top:882.57px;font-size:13.5px;line-height:13.5px;color:#000;left:1712.00px;transform-origin:0 0;transform:scaleX(1.0082);">Step</span>
<div class="btn" style="left:1712px;top:898px;width:70px;height:24px;"></div>
<span class="t" style="top:903.37px;font-size:13.5px;line-height:13.5px;color:#000;left:1716.00px;transform-origin:0 0;transform:scaleX(0.9722);">6 dB</span>
<svg style="left:1766px;top:907.0px" width="11" height="7" viewBox="0 0 11 7" >
<path d="M0.500 0.500 h9 l-4.500 5z" fill="#000"/>
</svg>
<div class="grp" style="left:1801px;top:744px;width:109px;height:122px;background:#fff;"></div>
<div style="left:1807px;top:738px;width:46px;height:12px;background:#fff;"></div>
<span class="t" style="top:737.57px;font-size:13.5px;line-height:13.5px;color:#000;left:1809.00px;transform-origin:0 0;transform:scaleX(0.9331);">X - axis</span>
<div style="left:1811px;top:755px;width:16px;height:16px;border:1px solid #8e8f8f;background:linear-gradient(135deg,#cfd3d7 10%,#f4f5f6 90%);box-shadow:inset 0 0 0 1px #f4f4f4,inset 0 0 0 2px #b4b8bb;"></div>
<svg style="left:1811px;top:755px" width="16" height="16" viewBox="0 0 16 16" >
<path d="M3.800 8.200 L6.200 12.300 L12.200 3.200" stroke="#3a4f9c" stroke-width="2.2" fill="none"/>
</svg>
<span class="t" style="top:756.07px;font-size:13.5px;line-height:13.5px;color:#000;left:1830.00px;transform-origin:0 0;transform:scaleX(1.0211);">Log</span>
<div style="left:1866px;top:755px;width:16px;height:16px;border:1px solid #8e8f8f;background:linear-gradient(135deg,#cfd3d7 10%,#f4f5f6 90%);box-shadow:inset 0 0 0 1px #f4f4f4,inset 0 0 0 2px #b4b8bb;"></div>
<span class="t" style="top:756.07px;font-size:13.5px;line-height:13.5px;color:#000;left:1885.00px;transform-origin:0 0;transform:scaleX(0.9851);">3D</span>
<div style="left:1811px;top:777px;width:16px;height:16px;border:1px solid #b4b4b4;background:#f6f6f6;box-shadow:inset 0 0 0 1px #fbfbfb,inset 0 0 0 2px #e2e2e2;"></div>
<span class="t" style="top:778.57px;font-size:13.5px;line-height:13.5px;color:#8e8e8e;left:1830.00px;transform-origin:0 0;transform:scaleX(0.9440);">true X</span>
<div class="btn" style="left:1811px;top:796px;width:90px;height:24px;"></div>
<span class="t" style="top:801.37px;font-size:13.5px;line-height:13.5px;color:#000;left:1815.00px;transform-origin:0 0;transform:scaleX(0.9786);">Fit screen</span>
<svg style="left:1885px;top:805.0px" width="11" height="7" viewBox="0 0 11 7" >
<path d="M0.500 0.500 h9 l-4.500 5z" fill="#000"/>
</svg>
<div class="btnd" style="left:1811px;top:830px;width:90px;height:24px;"></div>
<span class="t" style="top:835.37px;font-size:13.5px;line-height:13.5px;color:#8a8a8a;left:1815.00px;transform-origin:0 0;transform:scaleX(0.9058);">1/1</span>
<svg style="left:1885px;top:839.0px" width="11" height="7" viewBox="0 0 11 7" >
<path d="M0.500 0.500 h9 l-4.500 5z" fill="#9a9a9a"/>
</svg>
<div class="grp" style="left:1801px;top:878px;width:109px;height:52px;background:#fff;"></div>
<div style="left:1807px;top:872px;width:68px;height:12px;background:#fff;"></div>
<span class="t" style="top:871.57px;font-size:13.5px;line-height:13.5px;color:#000;left:1809.00px;transform-origin:0 0;transform:scaleX(0.9692);">Channel(s)</span>
<div class="btn" style="left:1811px;top:893px;width:90px;height:24px;"></div>
<span class="t" style="top:898.37px;font-size:13.5px;line-height:13.5px;color:#000;left:1815.00px;transform-origin:0 0;">A</span>
<svg style="left:1885px;top:902.0px" width="11" height="7" viewBox="0 0 11 7" >
<path d="M0.500 0.500 h9 l-4.500 5z" fill="#000"/>
</svg>
<div style="left:1px;top:1px;width:429px;height:129px;border-radius:7px;box-shadow:0 2px 9px 2px rgba(0,0,0,.55);"></div>
<div style="left:1px;top:1px;width:429px;height:129px;border-radius:2px;border:1px solid #4a4a52;background:linear-gradient(180deg,#d0d1da 0px,#d6d7de 40px,#d2d2d8 70px,#c4c4c8 127px);box-shadow:inset 0 0 0 1px rgba(255,255,255,.8);"></div>
<div style="left:3px;top:3px;width:425px;height:26px;background:linear-gradient(90deg,#c3c4d6 0px,#c9cad8 180px,#c0bccb 300px,#b4adbb 380px,#aca4b2 425px);"></div>
<div style="left:3px;top:3px;width:425px;height:12px;background:linear-gradient(180deg,rgba(255,255,255,.28),rgba(255,255,255,.04));"></div>
<div style="left:424px;top:29px;width:5px;height:96px;background:linear-gradient(180deg,#d4d4da 0px,#cfcfd4 24px,#6a6a6c 29px,#1e1e1e 33px,#1c1c1c 96px);"></div>
<div style="left:3px;top:124px;width:426px;height:5px;background:linear-gradient(90deg,#d9d9de 0px,#d2d2d6 6px,#8c8c8c 9px,#858585 44px,#2a2a2a 48px,#1c1c1c 52px,#1c1c1c 426px);"></div>
<div style="left:2px;top:30px;width:5px;height:95px;background:linear-gradient(180deg,#d6d7e2 0%,#d0d0d6 100%);"></div>
<span class="t" style="top:7.94px;font-size:14.6px;line-height:14.6px;color:#05051a;left:9.00px;transform-origin:0 0;">Volt Meter ** Ch A  WARNING: VOLT calibration NOT appli...</span>
<div style="left:403px;top:6px;width:21px;height:21px;border:1px solid #55555f;border-radius:3px;box-shadow:inset 0 0 0 1px rgba(235,233,240,.9);background:linear-gradient(#b3adbc,#a59fb0 50%,#a09aab 50%,#aaa4b4);"></div>
<svg style="left:403px;top:6px" width="21" height="21" viewBox="0 0 21 21" >
<path d="M7.400 7.300L13.600 13.700M13.600 7.300L7.400 13.700" stroke="#4a4a5a" stroke-width="4.6" fill="none" stroke-linecap="square"/><path d="M7.400 7.300L13.600 13.700M13.600 7.300L7.400 13.700" stroke="#fff" stroke-width="2.8" fill="none" stroke-linecap="square"/>
</svg>
<div style="left:7px;top:29px;width:417px;height:95px;background:#f0f0f0;border:1px solid #6f6f73;border-bottom-color:#fff;border-right-color:#fdfdfd;"></div>
<div style="left:8px;top:30px;width:415px;height:93px;border:1px solid #fff;border-right-color:#a0a0a0;border-bottom-color:#a0a0a0;"></div>
<div style="left:10px;top:32px;width:411px;height:50px;background:#000;"></div>
<span class="t" style="top:31.41px;font-size:51.5px;line-height:51.5px;color:#00ff00;left:83.77px;transform-origin:50% 0;-webkit-text-stroke:0.600px #00ff00;">0.015376 V</span>
<div style="left:12px;top:85px;width:267px;height:36px;border:1px solid #a0a0a0;box-shadow:inset 1px 1px 0 #fff, 1px 1px 0 #fff;"></div>
<div style="left:15px;top:88px;width:261px;height:30px;border:1px solid #a0a0a0;box-shadow:inset 1px 1px 0 #fff, 1px 1px 0 #fff;"></div>
<div style="left:283px;top:85px;width:139px;height:36px;border:1px solid #a0a0a0;box-shadow:inset 1px 1px 0 #fff, 1px 1px 0 #fff;border-right:none;"></div>
<div style="left:286px;top:88px;width:136px;height:30px;border:1px solid #a0a0a0;box-shadow:inset 1px 1px 0 #fff, 1px 1px 0 #fff;border-right:none;"></div>
<div style="left:33px;top:94.0px;width:16px;height:16px;border:1px solid #8a8b8c;border-radius:50%;background:#fbfbfb;"></div>
<div style="left:36px;top:97.0px;width:10px;height:10px;border-radius:50%;background:radial-gradient(circle at 38% 32%,#c8f4ff 0%,#3cb4e4 24%,#1878b8 44%,#0c3c68 68%,#0a2848 100%);"></div>
<span class="t" style="top:95.37px;font-size:13.5px;line-height:13.5px;color:#000;left:51.80px;transform-origin:0 0;transform:scaleX(0.9935);">TRMS</span>
<div style="left:101px;top:94.0px;width:16px;height:16px;border:1px solid #8a8b8c;border-radius:50%;background:#fbfbfb;"></div>
<div style="left:104px;top:97.0px;width:10px;height:10px;border-radius:50%;border:1px solid #c3c7cb;background:linear-gradient(135deg,#b4b8bc 0%,#dfe1e3 50%,#f6f6f6 100%);"></div>
<span class="t" style="top:95.37px;font-size:13.5px;line-height:13.5px;color:#000;left:119.30px;transform-origin:0 0;">PP</span>
<div style="left:155px;top:94.0px;width:16px;height:16px;border:1px solid #8a8b8c;border-radius:50%;background:#fbfbfb;"></div>
<div style="left:158px;top:97.0px;width:10px;height:10px;border-radius:50%;border:1px solid #c3c7cb;background:linear-gradient(135deg,#b4b8bc 0%,#dfe1e3 50%,#f6f6f6 100%);"></div>
<span class="t" style="top:95.37px;font-size:13.5px;line-height:13.5px;color:#000;left:173.30px;transform-origin:0 0;transform:scaleX(0.9772);">Mean</span>
<div style="left:219px;top:94.0px;width:16px;height:16px;border:1px solid #8a8b8c;border-radius:50%;background:#fbfbfb;"></div>
<div style="left:222px;top:97.0px;width:10px;height:10px;border-radius:50%;border:1px solid #c3c7cb;background:linear-gradient(135deg,#b4b8bc 0%,#dfe1e3 50%,#f6f6f6 100%);"></div>
<span class="t" style="top:95.37px;font-size:13.5px;line-height:13.5px;color:#000;left:237.30px;transform-origin:0 0;transform:scaleX(0.9744);">DC</span>
<div style="left:292px;top:94.0px;width:16px;height:16px;border:1px solid #8a8b8c;border-radius:50%;background:#fbfbfb;"></div>
<div style="left:295px;top:97.0px;width:10px;height:10px;border-radius:50%;background:radial-gradient(circle at 38% 32%,#c8f4ff 0%,#3cb4e4 24%,#1878b8 44%,#0c3c68 68%,#0a2848 100%);"></div>
<span class="t" style="top:95.37px;font-size:13.5px;line-height:13.5px;color:#000;left:310.30px;transform-origin:0 0;">V</span>
<div style="left:326px;top:94.0px;width:16px;height:16px;border:1px solid #8a8b8c;border-radius:50%;background:#fbfbfb;"></div>
<div style="left:329px;top:97.0px;width:10px;height:10px;border-radius:50%;border:1px solid #c3c7cb;background:linear-gradient(135deg,#b4b8bc 0%,#dfe1e3 50%,#f6f6f6 100%);"></div>
<span class="t" style="top:95.37px;font-size:13.5px;line-height:13.5px;color:#000;left:344.30px;transform-origin:0 0;transform:scaleX(0.9876);">mV</span>
<div style="left:371px;top:94.0px;width:16px;height:16px;border:1px solid #8a8b8c;border-radius:50%;background:#fbfbfb;"></div>
<div style="left:374px;top:97.0px;width:10px;height:10px;border-radius:50%;border:1px solid #c3c7cb;background:linear-gradient(135deg,#b4b8bc 0%,#dfe1e3 50%,#f6f6f6 100%);"></div>
<span class="t" style="top:95.37px;font-size:13.5px;line-height:13.5px;color:#000;left:389.80px;transform-origin:0 0;transform:scaleX(0.9689);">dB</span>
<div style="left:410px;top:94px;width:11px;height:16px;overflow:hidden;"><div style="left:0.500px;top:0;width:16px;height:16px;border:1px solid #8a8b8c;border-radius:50%;background:#fbfbfb;"></div><div style="left:3.500px;top:3px;width:10px;height:10px;border-radius:50%;border:1px solid #c3c7cb;background:linear-gradient(135deg,#b4b8bc 0%,#dfe1e3 50%,#f6f6f6 100%);"></div></div>
<div style="left:478px;top:161px;width:965px;height:757px;border-radius:7px;box-shadow:0 1px 10px 3px rgba(0,0,0,.5);"></div>
<div style="left:478px;top:161px;width:965px;height:757px;border-radius:7px;border:1px solid #c4c4c4;background:#161616;box-shadow:inset 0 0 0 1px #0a0a0a;"></div>
<div style="left:480px;top:163px;width:961px;height:33px;border-radius:5px 5px 0 0;background:linear-gradient(90deg,#1a1a1a 0%,#0c0c0c 35%,#080808 60%,#2a2a2a 80%,#5e5e5e 93%,#6a6a6a 100%);"></div>
<div style="left:480px;top:163px;width:961px;height:14px;border-radius:5px 5px 0 0;background:linear-gradient(180deg,rgba(255,255,255,.10),rgba(255,255,255,.02));"></div>
<div style="left:479px;top:196px;width:7px;height:715px;background:linear-gradient(180deg,#151515 0px,#1a1a1a 90px,#4a4a4a 120px,#8c8c8c 150px,#c4c4c4 177px,#1c1c1c 177.500px,#161616 285px,#6e6e6e 297px,#9a9a9a 312px,#8a8a8a 330px,#2a2a2a 345px,#161616 360px,#161616 715px);"></div>
<div style="left:1435px;top:196px;width:7px;height:715px;background:linear-gradient(180deg,#6a6a6a 0px,#707070 120px,#8a8a8a 177px,#1c1c1c 177.500px,#161616 285px,#6e6e6e 297px,#a0a0a0 312px,#8a8a8a 330px,#2a2a2a 345px,#161616 360px,#161616 715px);"></div>
<div style="left:483px;top:165px;width:166px;height:28px;border-radius:14px;background:radial-gradient(ellipse at 50% 50%,rgba(255,255,255,.62) 0%,rgba(255,255,255,.52) 55%,rgba(255,255,255,0) 100%);filter:blur(3px);"></div>
<svg style="left:486px;top:168px" width="20" height="20" viewBox="0 0 20 20" shape-rendering="crispEdges">
<rect width="20" height="20" fill="#00e000"/>
<path d="M2.5 1V19 M1 2.5H19 M5.5 1V19 M1 5.5H19 M8.5 1V19 M1 8.5H19 M11.5 1V19 M1 11.5H19 M14.5 1V19 M1 14.5H19 M17.5 1V19 M1 17.5H19" stroke="#063" stroke-width="1" stroke-dasharray="1 1" fill="none"/>
<path d="M2 11.500H5L7 4.500H10L12 11.500H18" stroke="#ffee00" stroke-width="1.3" fill="none" shape-rendering="auto"/>
<path d="M2 15.500H8M11 17.500H18M11 13V17" stroke="#e00000" stroke-width="1.5" fill="none"/>
<rect x="16" y="1" width="3" height="3" fill="#fff"/><rect x="15" y="3" width="2" height="2" fill="#e00"/>
</svg>
<span class="t" style="top:170.80px;font-size:15px;line-height:15px;color:#000;left:511.50px;transform-origin:0 0;transform:scaleX(0.9618);">Frequency spectrum</span>
<div style="left:1308px;top:161px;width:129px;height:25px;border:1px solid #d0d0d0;border-top:none;border-radius:0 0 5px 5px;background:#555;overflow:hidden;"><div style="left:0;top:0;width:35px;height:24px;background:linear-gradient(#a4a4a4 0%,#828282 45%,#4c4c4c 50%,#5e5e5e 100%);"></div><div style="left:35px;top:0;width:1px;height:24px;background:#d8d8d8;"></div><div style="left:36px;top:0;width:32px;height:24px;background:linear-gradient(#a8a8a8 0%,#868686 45%,#4e4e4e 50%,#606060 100%);"></div><div style="left:68px;top:0;width:1px;height:24px;background:#d8d8d8;"></div><div style="left:69px;top:0;width:60px;height:24px;background:linear-gradient(#e09a8c 0%,#cf7666 45%,#b8351a 50%,#c94a28 85%,#d4603c 100%);"></div></div>
<svg style="left:1308px;top:161px" width="129" height="25" viewBox="0 0 129 25" >
<rect x="10.500" y="14.500" width="15" height="4" fill="#fff" stroke="#3a3a46" stroke-width="1"/>
<path d="M43.500 5.500h16v12h-16z M47.500 9.500v4h8v-4z" fill="#f4f4f4" fill-rule="evenodd" stroke="#3a3a46" stroke-width="1"/>
<path d="M91.500 5.500h4.500l3 3.600l3-3.600h4.500l-5.300 6.200l5.300 6.300h-4.500l-3-3.700l-3 3.700h-4.500l5.300-6.300z" fill="#f4f4f4" stroke="#3a3a46" stroke-width="1"/>
</svg>
<div style="left:484px;top:193px;width:953px;height:719px;border:1px solid #bdbdbd;border-radius:1px;"></div>
<div style="left:485px;top:194px;width:951px;height:717px;border:1px solid #0c0c0c;"></div>
<div style="left:486px;top:195px;width:949px;height:715px;background:#f0f0f0;"></div>
<div style="left:486px;top:195px;width:949px;height:26px;background:linear-gradient(180deg,#ffffff 0px,#f6f7fc 9px,#d9ddef 10px,#dfe3f3 20px,#e6e9f6 23px,#c8cad4 24px,#f4f4f6 25px);"></div>
<span class="t" style="top:201.51px;font-size:14.4px;line-height:14.4px;color:#05051a;left:493.00px;transform-origin:0 0;transform:scaleX(0.9912);">File</span>
<span class="t" style="top:201.51px;font-size:14.4px;line-height:14.4px;color:#05051a;left:530.00px;transform-origin:0 0;">X-axis</span>
<span class="t" style="top:201.51px;font-size:14.4px;line-height:14.4px;color:#05051a;left:584.50px;transform-origin:0 0;transform:scaleX(1.0177);">View</span>
<span class="t" style="top:201.51px;font-size:14.4px;line-height:14.4px;color:#05051a;left:630.50px;transform-origin:0 0;transform:scaleX(1.0636);">Help</span>
<div style="left:487px;top:222px;width:928px;height:257px;background:#000;border:1px solid #6a6a6a;border-right-color:#8a8a8a;border-bottom-color:#7c7c7c;box-shadow:1px 1px 0 #cfcfcf;"></div>
<span class="t" style="top:235.16px;font-size:12.8px;line-height:12.8px;color:#fff;left:811.24px;transform-origin:50% 0;transform:scaleX(1.0095);">FREQUENCY SPECTRUM</span>
<div style="left:1300px;top:257px;width:81px;height:23px;background:#fff;border:1px solid #c0c0c0;"></div>
<div style="left:1307px;top:267.5px;width:13px;height:1.5px;background:#30e030;"></div>
<span class="t" style="top:262.16px;font-size:12.8px;line-height:12.8px;color:#000;left:1326.00px;transform-origin:0 0;transform:scaleX(1.0663);">A (Left)</span>
<span class="t" style="top:433.42px;font-size:12.5px;line-height:12.5px;color:#0c8c8c;font-weight:bold;left:919.36px;transform-origin:50% 0;transform:scaleX(1.0473);">Hz</span>
<span class="t" style="top:455.16px;font-size:12.8px;line-height:12.8px;color:#f4f4f4;left:862.26px;transform-origin:50% 0;transform:scaleX(1.0252);">Frequency</span>
<span class="t" style="top:326.42px;font-size:12.5px;line-height:12.5px;color:#0c8c8c;font-weight:bold;left:517.00px;transform-origin:0 0;transform:scaleX(1.0202);">dB</span>
<span class="t" style="top:415.86px;font-size:12.8px;line-height:12.8px;color:#e0e0e0;left:577.24px;transform-origin:50% 0;">0</span>
<span class="t" style="top:415.86px;font-size:12.8px;line-height:12.8px;color:#e0e0e0;left:632.43px;transform-origin:50% 0;">2,000</span>
<span class="t" style="top:415.86px;font-size:12.8px;line-height:12.8px;color:#e0e0e0;left:700.08px;transform-origin:50% 0;">4,000</span>
<span class="t" style="top:415.86px;font-size:12.8px;line-height:12.8px;color:#e0e0e0;left:767.73px;transform-origin:50% 0;">6,000</span>
<span class="t" style="top:415.86px;font-size:12.8px;line-height:12.8px;color:#e0e0e0;left:835.38px;transform-origin:50% 0;">8,000</span>
<span class="t" style="top:415.86px;font-size:12.8px;line-height:12.8px;color:#e0e0e0;left:899.47px;transform-origin:50% 0;">10,000</span>
<span class="t" style="top:415.86px;font-size:12.8px;line-height:12.8px;color:#e0e0e0;left:967.12px;transform-origin:50% 0;">12,000</span>
<span class="t" style="top:415.86px;font-size:12.8px;line-height:12.8px;color:#e0e0e0;left:1034.77px;transform-origin:50% 0;">14,000</span>
<span class="t" style="top:415.86px;font-size:12.8px;line-height:12.8px;color:#e0e0e0;left:1102.42px;transform-origin:50% 0;">16,000</span>
<span class="t" style="top:415.86px;font-size:12.8px;line-height:12.8px;color:#e0e0e0;left:1170.07px;transform-origin:50% 0;">18,000</span>
<span class="t" style="top:415.86px;font-size:12.8px;line-height:12.8px;color:#e0e0e0;left:1237.72px;transform-origin:50% 0;">20,000</span>
<svg style="left:487px;top:222px" width="928" height="257" viewBox="0 0 928 257" >
<path d="M161.5 33V184 M229.5 33V184 M297.5 33V184 M364.5 33V184 M432.5 33V184 M500.5 33V184 M567.5 33V184 M635.5 33V184 M703.5 33V184 M770.5 33V184 M94 49.5H787 M94 76.5H787 M94 103.5H787 M94 130.5H787 M94 157.5H787" stroke="#7a7a7a" stroke-width="1" fill="none" shape-rendering="crispEdges"/>
<path d="M94.5 33V185 M93.5 184.5H787" stroke="#848484" stroke-width="2" fill="none" shape-rendering="crispEdges"/>
<path d="M94.5 185V191 M111.5 185V188 M128.5 185V188 M145.5 185V188 M161.5 185V191 M178.5 185V188 M195.5 185V188 M212.5 185V188 M229.5 185V191 M246.5 185V188 M263.5 185V188 M280.5 185V188 M297.5 185V191 M314.5 185V188 M331.5 185V188 M347.5 185V188 M364.5 185V191 M381.5 185V188 M398.5 185V188 M415.5 185V188 M432.5 185V191 M449.5 185V188 M466.5 185V188 M483.5 185V188 M500.5 185V191 M517.5 185V188 M534.5 185V188 M550.5 185V188 M567.5 185V191 M584.5 185V188 M601.5 185V188 M618.5 185V188 M635.5 185V191 M652.5 185V188 M669.5 185V188 M686.5 185V188 M703.5 185V191 M720.5 185V188 M736.5 185V188 M753.5 185V188 M770.5 185V191 M787.5 185V188 M89 49.5H94 M91 56.5H94 M91 63.5H94 M91 69.5H94 M89 76.5H94 M91 83.5H94 M91 89.5H94 M91 96.5H94 M89 103.5H94 M91 110.5H94 M91 116.5H94 M91 123.5H94 M89 130.5H94 M91 137.5H94 M91 143.5H94 M91 150.5H94 M89 157.5H94 M91 163.5H94 M91 170.5H94 M91 177.5H94 M89 184.5H94 M91 42.5H94 M91 36.5H94" stroke="#848484" stroke-width="1" fill="none" shape-rendering="crispEdges"/>
<polyline points="93.8,141.1 94.9,120.3 96.0,119.8 97.0,113.7 98.1,114.2 99.2,116.2 100.3,122.6 101.4,119.3 102.5,127.3 103.5,127.3 104.6,143.0 105.7,134.8 106.8,123.3 107.9,126.3 109.0,125.0 110.0,132.0 111.1,131.0 112.2,124.1 113.3,134.0 114.4,129.1 115.4,131.3 116.5,137.6 117.6,129.2 118.7,133.2 119.8,136.9 120.9,150.4 121.9,132.5 123.0,129.1 124.1,126.7 125.2,138.8 126.3,142.3 127.4,137.7 128.4,135.9 129.5,141.5 130.6,134.7 131.7,128.4 132.8,137.5 133.8,141.4 134.9,133.9 136.0,127.4 137.1,131.1 138.2,129.0 139.3,130.6 140.3,134.4 141.4,129.7 142.5,136.7 143.6,142.0 144.7,133.2 145.8,134.3 146.8,149.5 147.9,131.8 149.0,132.7 150.1,137.6 151.2,126.4 152.2,134.6 153.3,149.2 154.4,136.6 155.5,139.2 156.6,145.5 157.7,144.4 158.7,135.1 159.8,130.9 160.9,129.9 162.0,132.7 163.1,134.5 164.2,124.7 165.2,130.9 166.3,128.7 167.4,138.3 168.5,133.4 169.6,134.9 170.7,143.6 171.7,136.2 172.8,130.6 173.9,134.6 175.0,143.0 176.1,128.6 177.1,137.1 178.2,137.3 179.3,137.1 180.4,144.2 181.5,133.6 182.6,132.2 183.6,137.2 184.7,134.5 185.8,142.5 186.9,143.8 188.0,142.7 189.1,133.1 190.1,134.9 191.2,128.9 192.3,133.6 193.4,149.9 194.5,148.1 195.5,149.8 196.6,133.0 197.7,132.7 198.8,138.6 199.9,143.4 201.0,139.1 202.0,130.7 203.1,146.3 204.2,141.0 205.3,132.4 206.4,134.6 207.5,152.0 208.5,135.5 209.6,140.5 210.7,131.6 211.8,146.1 212.9,131.9 213.9,153.8 215.0,134.8 216.1,131.6 217.2,151.9 218.3,137.2 219.4,135.9 220.4,143.0 221.5,133.5 222.6,133.3 223.7,133.6 224.8,131.7 225.9,134.9 226.9,138.0 228.0,135.7 229.1,136.8 230.2,137.1 231.3,136.0 232.3,126.8 233.4,132.3 234.5,140.5 235.6,134.5 236.7,137.6 237.8,131.2 238.8,133.5 239.9,141.5 241.0,137.7 242.1,146.5 243.2,138.5 244.3,137.0 245.3,136.2 246.4,136.5 247.5,140.0 248.6,148.6 249.7,137.7 250.7,143.4 251.8,131.5 252.9,130.4 254.0,130.4 255.1,141.8 256.2,132.1 257.2,139.3 258.3,145.0 259.4,133.1 260.5,131.1 261.6,112.0 262.9,80.1 263.7,101.3 264.8,121.8 265.9,140.0 267.0,137.6 268.1,128.4 269.1,138.6 270.2,130.2 271.3,141.9 272.4,131.2 273.5,129.4 274.6,133.8 275.6,135.8 276.7,142.8 277.8,132.0 278.9,137.8 280.0,130.8 281.1,139.8 282.1,130.4 283.2,138.8 284.3,130.7 285.4,130.3 286.5,136.2 287.5,137.6 288.6,133.7 289.7,137.2 290.8,131.2 291.9,129.8 293.0,134.3 294.0,141.2 295.1,136.8 296.2,134.8 297.3,133.5 298.4,140.7 299.5,132.6 300.5,148.0 301.6,142.8 302.7,136.7 303.8,135.4 304.9,139.8 306.0,134.7 307.0,140.1 308.1,135.5 309.2,129.9 310.3,130.4 311.4,133.6 312.4,130.7 313.5,144.5 314.6,133.9 315.7,134.1 316.8,132.1 317.9,133.7 318.9,152.2 320.0,133.4 321.1,134.3 322.2,125.8 323.3,136.5 324.4,132.8 325.4,127.1 326.5,130.8 327.6,129.5 328.7,134.2 329.8,138.0 330.8,141.0 331.9,140.3 333.0,135.3 334.1,155.0 335.2,140.5 336.3,129.6 337.3,145.4 338.4,140.7 339.5,131.8 340.6,136.9 341.7,142.4 342.8,138.0 343.8,139.7 344.9,133.2 346.0,131.7 347.1,131.2 348.2,137.6 349.2,138.7 350.3,136.7 351.4,142.2 352.5,136.8 353.6,139.2 354.7,140.7 355.7,130.5 356.8,140.6 357.9,140.8 359.0,136.7 360.1,136.5 361.2,141.4 362.2,139.0 363.3,131.9 364.4,140.9 365.5,137.8 366.6,130.1 367.6,139.5 368.7,139.5 369.8,137.0 370.9,136.3 372.0,145.5 373.1,153.3 374.1,128.4 375.2,142.8 376.3,136.1 377.4,132.9 378.5,132.9 379.6,131.8 380.6,149.6 381.7,142.8 382.8,145.2 383.9,133.2 385.0,136.6 386.0,126.8 387.1,136.1 388.2,131.8 389.3,134.4 390.4,126.2 391.5,143.4 392.5,147.4 393.6,145.9 394.7,135.1 395.8,167.2 396.9,135.0 398.0,133.8 399.0,131.1 400.1,134.0 401.2,133.5 402.3,137.0 403.4,135.1 404.4,145.1 405.5,138.8 406.6,148.4 407.7,140.4 408.8,140.6 409.9,141.1 410.9,134.0 412.0,147.4 413.1,136.4 414.2,134.1 415.3,152.9 416.4,139.2 417.4,137.6 418.5,132.3 419.6,132.9 420.7,136.8 421.8,146.2 422.8,136.1 423.9,132.7 425.0,134.7 426.1,133.3 427.2,137.8 428.3,141.0 429.3,131.8 430.4,110.7 432.0,69.0 432.6,86.3 433.7,110.7 434.8,131.8 435.4,163.9 436.9,135.5 438.0,149.7 439.1,144.6 440.2,129.1 441.3,145.6 442.3,138.1 443.4,135.4 444.5,143.0 445.6,152.2 446.7,131.2 447.7,137.1 448.8,148.5 449.9,139.0 451.0,136.2 452.1,129.4 453.2,133.2 454.2,139.0 455.3,131.6 456.4,138.9 457.5,131.3 458.6,137.1 459.7,135.3 460.7,138.3 461.8,134.2 462.9,150.2 464.0,145.1 465.1,133.3 466.1,150.4 467.2,134.3 468.3,136.8 469.4,135.7 470.5,139.4 471.6,133.2 472.6,134.7 473.7,139.7 474.8,142.2 475.9,136.9 477.0,151.8 478.1,142.8 479.1,133.1 480.2,134.1 481.3,136.7 482.4,133.1 483.5,139.3 484.5,131.9 485.6,133.0 486.7,131.8 487.8,130.1 488.9,145.7 490.0,140.6 491.0,147.7 492.1,132.6 493.2,140.9 494.3,139.3 495.4,135.1 496.5,132.3 497.5,133.9 498.6,149.9 499.7,150.9 500.8,134.9 501.9,142.9 502.9,129.8 504.0,135.1 505.1,132.7 506.2,145.7 507.3,135.6 508.4,141.4 509.4,129.2 510.5,147.0 511.6,141.0 512.7,134.7 513.8,150.1 514.9,133.7 515.9,134.4 517.0,126.8 518.1,146.7 519.2,148.7 520.3,133.3 521.3,150.0 522.4,135.3 523.5,135.9 524.6,147.5 525.7,142.3 526.8,142.9 527.8,138.4 528.9,134.4 530.0,141.8 531.1,132.7 532.2,133.4 533.3,129.2 534.3,134.5 535.4,145.1 536.5,133.7 537.6,131.0 538.7,140.2 539.7,133.3 540.8,138.6 541.9,141.0 543.0,139.3 544.1,143.4 545.2,137.8 546.2,140.8 547.3,133.4 548.4,132.0 549.5,137.9 550.6,135.4 551.7,136.9 552.7,142.5 553.8,157.6 554.9,136.5 556.0,143.4 557.1,129.5 558.1,131.4 559.2,152.3 560.3,147.6 561.4,144.3 562.5,133.6 563.6,148.9 564.6,138.2 565.7,133.0 566.8,131.8 567.9,133.6 569.0,139.1 570.1,127.9 571.1,139.6 572.2,134.3 573.3,142.1 574.4,130.2 575.5,135.4 576.6,138.9 577.6,132.2 578.7,135.6 579.8,134.3 580.9,134.3 582.0,134.9 583.0,144.3 584.1,135.0 585.2,140.5 586.3,127.2 587.4,135.8 588.5,135.5 589.5,136.3 590.6,128.2 591.7,138.9 592.8,130.8 593.9,135.1 595.0,131.9 596.0,137.1 597.1,131.2 598.2,136.6 599.3,115.3 600.4,91.2 601.2,66.4 602.5,103.8 603.6,126.2 604.7,142.9 605.8,141.9 606.9,135.5 607.9,143.1 609.0,133.0 610.1,137.1 611.2,131.5 612.3,140.5 613.4,129.5 614.4,141.2 615.5,143.4 616.6,138.3 617.7,138.7 618.8,135.7 619.8,135.8 620.9,136.1 622.0,128.7 623.1,136.7 624.2,141.3 625.3,136.2 626.3,136.4 627.4,131.6 628.5,130.9 629.6,136.9 630.7,138.9 631.8,140.7 632.8,137.0 633.9,136.9 635.0,149.4 636.1,144.0 637.2,140.6 638.2,132.7 639.3,136.7 640.4,146.7 641.5,141.9 642.6,130.2 643.7,141.2 644.7,145.7 645.8,142.7 646.9,136.8 648.0,132.9 649.1,136.9 650.2,129.3 651.2,132.2 652.3,139.6 653.4,132.3 654.5,131.4 655.6,138.9 656.6,144.6 657.7,138.0 658.8,131.1 659.9,138.7 661.0,138.2 662.1,121.9 663.1,103.5 664.0,83.9 665.3,111.9 666.4,129.2 667.5,138.9 668.6,138.0 669.6,134.4 670.7,129.5 671.8,139.0 672.9,137.6 674.0,132.4 675.0,140.0 676.1,127.6 677.2,132.4 678.3,134.5 679.4,139.6 680.5,140.3 681.5,133.6 682.6,135.4 683.7,133.1 684.8,146.9 685.9,138.0 687.0,130.5 688.0,140.5 689.1,183.4 690.2,151.3 691.3,136.7 692.4,133.0 693.4,139.1 694.5,133.8 695.9,123.6 696.7,135.2 697.8,137.0 698.9,141.3 699.9,147.1 701.0,176.0 702.1,134.6 703.2,146.8 704.3,132.5 705.4,146.2 706.4,146.3 707.5,138.8 708.6,139.0 709.7,140.6 710.8,146.0 711.9,146.5 712.9,144.0 714.0,148.5 715.1,140.4 716.2,157.9 717.3,152.0 718.3,140.8 719.4,148.3 720.5,148.5 721.6,152.6 722.7,141.2 723.8,146.8 724.8,147.5 725.9,144.7 727.0,148.4 728.1,144.6 729.2,146.6 730.3,141.9 731.3,139.7 732.4,141.2 733.5,140.6 734.6,144.3 735.7,138.7 736.7,149.8 737.8,150.0 738.9,140.5 740.0,145.4 741.1,130.9 742.0,103.4 743.2,138.8 744.3,142.2 745.4,142.5 746.5,155.0 747.6,150.3 748.7,150.4 749.7,142.8 750.8,153.1 751.9,146.5 753.0,140.8 754.1,146.4 755.1,147.6 756.2,163.6 757.3,156.7 758.4,142.1 759.5,149.2 760.6,154.2 761.8,178.7 762.7,145.6 763.8,141.1 764.9,135.7 766.0,130.3 767.1,119.5 768.1,106.9 769.2,68.3 770.3,34.0 771.4,68.3 772.5,106.9 773.5,119.5 774.6,130.3 775.7,135.7 776.8,141.1 778.1,169.3 779.0,149.9 780.0,154.2 781.1,161.6 782.2,149.4 783.3,162.6 784.4,152.0 785.5,150.3 786.5,154.4" stroke="#00e800" stroke-width="1.25" fill="none" stroke-linejoin="round"/>
</svg>
<span class="t" style="top:266.36px;font-size:12.8px;line-height:12.8px;color:#e0e0e0;left:552.50px;transform-origin:100% 0;">-40</span>
<span class="t" style="top:293.26px;font-size:12.8px;line-height:12.8px;color:#e0e0e0;left:552.50px;transform-origin:100% 0;">-60</span>
<span class="t" style="top:320.16px;font-size:12.8px;line-height:12.8px;color:#e0e0e0;left:552.50px;transform-origin:100% 0;">-80</span>
<span class="t" style="top:347.06px;font-size:12.8px;line-height:12.8px;color:#e0e0e0;left:545.38px;transform-origin:100% 0;">-100</span>
<span class="t" style="top:373.96px;font-size:12.8px;line-height:12.8px;color:#e0e0e0;left:545.38px;transform-origin:100% 0;">-120</span>
<span class="t" style="top:400.86px;font-size:12.8px;line-height:12.8px;color:#e0e0e0;left:545.38px;transform-origin:100% 0;">-140</span>
<div style="left:487px;top:505px;width:928px;height:257px;background:#000;border:1px solid #6a6a6a;border-right-color:#8a8a8a;border-bottom-color:#7c7c7c;box-shadow:1px 1px 0 #cfcfcf;"></div>
<span class="t" style="top:518.16px;font-size:12.8px;line-height:12.8px;color:#fff;left:831.61px;transform-origin:50% 0;transform:scaleX(1.0187);">PHASE SPECTRUM</span>
<div style="left:1300px;top:540px;width:81px;height:23px;background:#fff;border:1px solid #c0c0c0;"></div>
<div style="left:1307px;top:550.5px;width:13px;height:1.5px;background:#30e030;"></div>
<span class="t" style="top:545.16px;font-size:12.8px;line-height:12.8px;color:#000;left:1326.00px;transform-origin:0 0;transform:scaleX(1.0663);">A (Left)</span>
<span class="t" style="top:716.42px;font-size:12.5px;line-height:12.5px;color:#0c8c8c;font-weight:bold;left:919.36px;transform-origin:50% 0;transform:scaleX(1.0473);">Hz</span>
<span class="t" style="top:738.16px;font-size:12.8px;line-height:12.8px;color:#f4f4f4;left:862.26px;transform-origin:50% 0;transform:scaleX(1.0252);">Frequency</span>
<span class="t" style="top:609.42px;font-size:12.5px;line-height:12.5px;color:#0c8c8c;font-weight:bold;left:517.00px;transform-origin:0 0;transform:scaleX(0.9602);">Dg</span>
<span class="t" style="top:698.86px;font-size:12.8px;line-height:12.8px;color:#e0e0e0;left:577.24px;transform-origin:50% 0;">0</span>
<span class="t" style="top:698.86px;font-size:12.8px;line-height:12.8px;color:#e0e0e0;left:632.43px;transform-origin:50% 0;">2,000</span>
<span class="t" style="top:698.86px;font-size:12.8px;line-height:12.8px;color:#e0e0e0;left:700.08px;transform-origin:50% 0;">4,000</span>
<span class="t" style="top:698.86px;font-size:12.8px;line-height:12.8px;color:#e0e0e0;left:767.73px;transform-origin:50% 0;">6,000</span>
<span class="t" style="top:698.86px;font-size:12.8px;line-height:12.8px;color:#e0e0e0;left:835.38px;transform-origin:50% 0;">8,000</span>
<span class="t" style="top:698.86px;font-size:12.8px;line-height:12.8px;color:#e0e0e0;left:899.47px;transform-origin:50% 0;">10,000</span>
<span class="t" style="top:698.86px;font-size:12.8px;line-height:12.8px;color:#e0e0e0;left:967.12px;transform-origin:50% 0;">12,000</span>
<span class="t" style="top:698.86px;font-size:12.8px;line-height:12.8px;color:#e0e0e0;left:1034.77px;transform-origin:50% 0;">14,000</span>
<span class="t" style="top:698.86px;font-size:12.8px;line-height:12.8px;color:#e0e0e0;left:1102.42px;transform-origin:50% 0;">16,000</span>
<span class="t" style="top:698.86px;font-size:12.8px;line-height:12.8px;color:#e0e0e0;left:1170.07px;transform-origin:50% 0;">18,000</span>
<span class="t" style="top:698.86px;font-size:12.8px;line-height:12.8px;color:#e0e0e0;left:1237.72px;transform-origin:50% 0;">20,000</span>
<svg style="left:487px;top:505px" width="928" height="257" viewBox="0 0 928 257" >
<path d="M161.5 33V184 M229.5 33V184 M297.5 33V184 M364.5 33V184 M432.5 33V184 M500.5 33V184 M567.5 33V184 M635.5 33V184 M703.5 33V184 M770.5 33V184 M94 66.5H787 M94 150.5H787" stroke="#7a7a7a" stroke-width="1" fill="none" shape-rendering="crispEdges"/>
<path d="M94.5 33V185 M93.5 184.5H787" stroke="#848484" stroke-width="2" fill="none" shape-rendering="crispEdges"/>
<path d="M94.5 185V191 M111.5 185V188 M128.5 185V188 M145.5 185V188 M161.5 185V191 M178.5 185V188 M195.5 185V188 M212.5 185V188 M229.5 185V191 M246.5 185V188 M263.5 185V188 M280.5 185V188 M297.5 185V191 M314.5 185V188 M331.5 185V188 M347.5 185V188 M364.5 185V191 M381.5 185V188 M398.5 185V188 M415.5 185V188 M432.5 185V191 M449.5 185V188 M466.5 185V188 M483.5 185V188 M500.5 185V191 M517.5 185V188 M534.5 185V188 M550.5 185V188 M567.5 185V191 M584.5 185V188 M601.5 185V188 M618.5 185V188 M635.5 185V191 M652.5 185V188 M669.5 185V188 M686.5 185V188 M703.5 185V191 M720.5 185V188 M736.5 185V188 M753.5 185V188 M770.5 185V191 M787.5 185V188 M91 182.5H94 M91 171.5H94 M91 161.5H94 M89 150.5H94 M91 140.5H94 M91 129.5H94 M91 119.5H94 M89 108.5H94 M91 98.5H94 M91 88.5H94 M91 77.5H94 M89 67.5H94 M91 56.5H94 M91 46.5H94 M91 35.5H94" stroke="#848484" stroke-width="1" fill="none" shape-rendering="crispEdges"/>
<polyline points="94.0,108.5 105.4,108.5 107.0,90.4 107.3,48.1 107.7,90.4 109.2,108.5 166.3,108.5 167.9,102.0 168.2,86.7 168.5,102.0 170.1,108.5 261.0,108.5 262.6,114.3 262.9,127.8 263.2,114.3 264.8,108.5 430.1,108.5 431.7,97.4 432.0,71.6 432.4,97.4 433.9,108.5 599.3,108.5 600.8,102.7 601.2,89.2 601.5,102.7 603.1,108.5 660.7,108.5 661.9,106.9 662.1,103.0 662.3,106.9 663.5,108.5 662.8,108.5 664.2,129.6 664.4,179.0 664.7,129.6 666.0,108.5 740.4,108.5 741.7,105.9 742.0,99.7 742.2,105.9 743.6,108.5 767.0,108.5 768.4,129.9 768.6,179.8 768.9,129.9 770.2,108.5 769.9,108.5 771.1,106.9 771.3,103.0 771.5,106.9 772.7,108.5 787.0,108.5" stroke="#00e400" stroke-width="2" fill="none" stroke-linejoin="round"/>
</svg>
<span class="t" style="top:566.32px;font-size:12.8px;line-height:12.8px;color:#e0e0e0;left:549.64px;transform-origin:100% 0;">100</span>
<span class="t" style="top:608.26px;font-size:12.8px;line-height:12.8px;color:#e0e0e0;left:563.88px;transform-origin:100% 0;">0</span>
<span class="t" style="top:650.20px;font-size:12.8px;line-height:12.8px;color:#e0e0e0;left:545.38px;transform-origin:100% 0;">-100</span>
<div style="left:1420px;top:230px;width:10px;height:242px;background:#e9ecec;border-left:1px solid #c3c7c9;border-right:1px solid #fdfdfd;"></div>
<div style="left:1418px;top:227px;width:14px;height:6px;background:linear-gradient(#fff,#e6e6e6);border:1px solid #9c9c9c;border-radius:2px;"></div>
<div style="left:1420px;top:513px;width:10px;height:242px;background:#e9ecec;border-left:1px solid #c3c7c9;border-right:1px solid #fdfdfd;"></div>
<div style="left:1418px;top:510px;width:14px;height:6px;background:linear-gradient(#fff,#e6e6e6);border:1px solid #9c9c9c;border-radius:2px;"></div>
<div style="left:498px;top:486px;width:930px;height:8px;background:#e9ecec;border-top:1px solid #c3c7c9;border-bottom:1px solid #fdfdfd;"></div>
<div style="left:492px;top:483px;width:6px;height:14px;background:linear-gradient(90deg,#fff,#e2e2e2);border:1px solid #8a8a8a;border-radius:2px;"></div>
<div style="left:498px;top:769px;width:930px;height:8px;background:#e9ecec;border-top:1px solid #c3c7c9;border-bottom:1px solid #fdfdfd;"></div>
<div style="left:492px;top:766px;width:6px;height:14px;background:linear-gradient(90deg,#fff,#e2e2e2);border:1px solid #8a8a8a;border-radius:2px;"></div>
<div class="grp" style="left:496px;top:800px;width:365px;height:46px;"></div>
<div style="left:502px;top:794px;width:60.5px;height:12px;background:#f0f0f0;"></div>
<span class="t" style="top:793.57px;font-size:13.5px;line-height:13.5px;color:#000;left:503.50px;transform-origin:0 0;transform:scaleX(0.9780);">Spectrum</span>
<div class="grp" style="left:496px;top:858px;width:365px;height:46px;"></div>
<div style="left:502px;top:852px;width:42.5px;height:12px;background:#f0f0f0;"></div>
<span class="t" style="top:851.57px;font-size:13.5px;line-height:13.5px;color:#000;left:503.50px;transform-origin:0 0;transform:scaleX(1.0058);">Phase</span>
<div class="grp" style="left:870px;top:800px;width:187px;height:46px;"></div>
<div style="left:876px;top:794px;width:83px;height:12px;background:#f0f0f0;"></div>
<span class="t" style="top:793.57px;font-size:13.5px;line-height:13.5px;color:#000;left:877.50px;transform-origin:0 0;transform:scaleX(0.9932);">Spectrum adj</span>
<div class="grp" style="left:870px;top:858px;width:187px;height:46px;"></div>
<div style="left:876px;top:852px;width:63px;height:12px;background:#f0f0f0;"></div>
<span class="t" style="top:851.57px;font-size:13.5px;line-height:13.5px;color:#000;left:877.50px;transform-origin:0 0;transform:scaleX(0.9826);">Phase adj</span>
<div class="grp" style="left:1063px;top:821px;width:133px;height:55px;"></div>
<div class="grp" style="left:1205px;top:821px;width:223px;height:55px;"></div>
<div style="left:507px;top:814px;width:78px;height:23px;border:1px solid #3c7fb1;border-radius:3px;background:linear-gradient(#f2fafd 0%,#dff2fb 48%,#c3e6f8 52%,#b1dcf3 100%);box-shadow:inset 0 0 0 1px #48d8fb;"></div>
<span class="t" style="top:818.57px;font-size:13.5px;line-height:13.5px;color:#000;left:517.49px;transform-origin:50% 0;transform:scaleX(0.9732);">Zoom out</span>
<div class="btn" style="left:507px;top:873px;width:78px;height:23px;"></div>
<span class="t" style="top:878.47px;font-size:13.5px;line-height:13.5px;color:#000;left:517.49px;transform-origin:50% 0;transform:scaleX(0.9732);">Zoom out</span>
<div class="btn" style="left:594px;top:805.5px;width:59px;height:15.5px;overflow:hidden;"></div>
<span class="t" style="top:806.87px;font-size:13.5px;line-height:13.5px;color:#000;left:602.49px;transform-origin:50% 0;transform:scaleX(0.9520);">-15% x</span>
<div class="btn" style="left:662px;top:805.5px;width:57px;height:15.5px;overflow:hidden;"></div>
<span class="t" style="top:806.87px;font-size:13.5px;line-height:13.5px;color:#000;left:667.80px;transform-origin:50% 0;transform:scaleX(0.8810);">+15% x</span>
<div class="btn" style="left:594px;top:825px;width:59px;height:15.5px;overflow:hidden;"></div>
<span class="t" style="top:826.37px;font-size:13.5px;line-height:13.5px;color:#000;left:602.49px;transform-origin:50% 0;transform:scaleX(0.9520);">-15% y</span>
<div class="btn" style="left:662px;top:825px;width:57px;height:15.5px;overflow:hidden;"></div>
<span class="t" style="top:826.37px;font-size:13.5px;line-height:13.5px;color:#000;left:667.80px;transform-origin:50% 0;transform:scaleX(0.8810);">+15% y</span>
<div class="btn" style="left:594px;top:863.5px;width:59px;height:15.5px;overflow:hidden;"></div>
<span class="t" style="top:864.87px;font-size:13.5px;line-height:13.5px;color:#000;left:602.49px;transform-origin:50% 0;transform:scaleX(0.9520);">-15% x</span>
<div class="btn" style="left:662px;top:863.5px;width:57px;height:15.5px;overflow:hidden;"></div>
<span class="t" style="top:864.87px;font-size:13.5px;line-height:13.5px;color:#000;left:667.80px;transform-origin:50% 0;transform:scaleX(0.8810);">+15% x</span>
<div class="btn" style="left:594px;top:883px;width:59px;height:15.5px;overflow:hidden;"></div>
<span class="t" style="top:884.37px;font-size:13.5px;line-height:13.5px;color:#000;left:602.49px;transform-origin:50% 0;transform:scaleX(0.9520);">-15% y</span>
<div class="btn" style="left:662px;top:883px;width:57px;height:15.5px;overflow:hidden;"></div>
<span class="t" style="top:884.37px;font-size:13.5px;line-height:13.5px;color:#000;left:667.80px;transform-origin:50% 0;transform:scaleX(0.8810);">+15% y</span>
<span class="t" style="top:805.57px;font-size:13.5px;line-height:13.5px;color:#000;left:731.50px;transform-origin:0 0;transform:scaleX(1.1368);">X:</span>
<span class="t" style="top:806.42px;font-size:12.5px;line-height:12.5px;color:#000;left:762.00px;transform-origin:0 0;transform:scaleX(0.9830);">19,031.919</span>
<span class="t" style="top:825.07px;font-size:13.5px;line-height:13.5px;color:#000;left:731.50px;transform-origin:0 0;transform:scaleX(1.2072);">Y:</span>
<span class="t" style="top:825.92px;font-size:12.5px;line-height:12.5px;color:#000;left:762.00px;transform-origin:0 0;transform:scaleX(0.9727);">-34.4407</span>
<span class="t" style="top:863.57px;font-size:13.5px;line-height:13.5px;color:#000;left:731.50px;transform-origin:0 0;transform:scaleX(1.1368);">X:</span>
<span class="t" style="top:864.42px;font-size:12.5px;line-height:12.5px;color:#000;left:762.00px;transform-origin:0 0;">0</span>
<span class="t" style="top:883.57px;font-size:13.5px;line-height:13.5px;color:#000;left:731.50px;transform-origin:0 0;transform:scaleX(1.2072);">Y:</span>
<span class="t" style="top:884.42px;font-size:12.5px;line-height:12.5px;color:#000;left:762.00px;transform-origin:0 0;">0</span>
<span class="t" style="top:814.57px;font-size:13.5px;line-height:13.5px;color:#000;left:909.00px;transform-origin:0 0;transform:scaleX(0.9715);">Smooth = Hanning</span>
<span class="t" style="top:872.57px;font-size:13.5px;line-height:13.5px;color:#000;left:908.00px;transform-origin:0 0;transform:scaleX(0.9723);">Threshold = -80 dB</span>
<div style="left:1096px;top:843px;width:16px;height:16px;border:1px solid #8e8f8f;background:linear-gradient(135deg,#cfd3d7 10%,#f4f5f6 90%);box-shadow:inset 0 0 0 1px #f4f4f4,inset 0 0 0 2px #b4b8bb;"></div>
<span class="t" style="top:844.57px;font-size:13.5px;line-height:13.5px;color:#000;left:1115.00px;transform-origin:0 0;transform:scaleX(0.9702);">Interlock</span>
<div style="left:1225px;top:843px;width:188px;height:19px;border:1px solid #b2b2b2;border-radius:3px;background:linear-gradient(#f2f2f2 0%,#d9d9d9 18%,#cacaca 50%,#c6c6c6 75%,#dadada 100%);"></div>
<div style="left:0px;top:1032px;width:1920px;height:48px;background:linear-gradient(90deg,#3c3d50 0px,#424357 120px,#45465a 280px,#625868 350px,#6a6070 400px,#5c5460 470px,#6e6670 530px,#58505a 590px,#403a3e 650px,#343032 760px,#3a3432 900px,#38322e 1000px,#403a3c 1100px,#322e2e 1180px,#2e2a2a 1290px,#3a383e 1360px,#5a5660 1430px,#767080 1470px,#66606c 1530px,#5c5460 1620px,#504a56 1720px,#443e4a 1820px,#3e3844 1905px);overflow:hidden;"><div style="left:560px;top:-10px;width:160px;height:70px;background:radial-gradient(ellipse at 50% 50%,rgba(120,105,100,.45),rgba(120,105,100,0) 70%);"></div><div style="left:680px;top:0px;width:120px;height:40px;background:radial-gradient(ellipse at 50% 50%,rgba(120,95,60,.40),rgba(120,95,60,0) 70%);"></div><div style="left:880px;top:5px;width:110px;height:40px;background:radial-gradient(ellipse at 50% 50%,rgba(130,100,55,.40),rgba(130,100,55,0) 70%);"></div><div style="left:980px;top:15px;width:120px;height:40px;background:radial-gradient(ellipse at 50% 50%,rgba(110,90,60,.35),rgba(110,90,60,0) 70%);"></div><div style="left:1160px;top:0px;width:150px;height:55px;background:radial-gradient(ellipse at 50% 50%,rgba(125,90,40,.50),rgba(125,90,40,0) 70%);"></div><div style="left:1400px;top:-20px;width:160px;height:90px;background:radial-gradient(ellipse at 50% 50%,rgba(150,140,160,.35),rgba(150,140,160,0) 70%);"></div><div style="left:420px;top:10px;width:140px;height:60px;background:radial-gradient(ellipse at 50% 50%,rgba(150,140,150,.30),rgba(150,140,150,0) 70%);"></div></div>
<div style="left:0px;top:1032px;width:1920px;height:48px;background:linear-gradient(180deg,rgba(255,255,255,.16) 0px,rgba(255,255,255,.04) 3px,rgba(0,0,0,0) 24px,rgba(0,0,0,.12) 49px);"></div>
<div style="left:0px;top:1032px;width:1920px;height:1px;background:#1e1e26;"></div>
<div style="left:0px;top:1033px;width:1920px;height:1px;background:rgba(255,255,255,.42);"></div>
<div style="left:11px;top:1034px;width:44px;height:44px;border-radius:50%;background:radial-gradient(circle at 50% 28%,#bfe6fb 0%,#5fb4e6 22%,#2474bb 48%,#164f96 70%,#0d3a78 100%);box-shadow:0 0 0 1px rgba(10,30,60,.65),0 0 5px 1px rgba(120,200,255,.35),inset 0 -6px 9px rgba(120,220,255,.55);"></div>
<div style="left:13px;top:1035px;width:40px;height:20px;border-radius:20px 20px 12px 12px / 18px 18px 6px 6px;background:linear-gradient(rgba(255,255,255,.55),rgba(255,255,255,.05));"></div>
<svg style="left:17px;top:1040px" width="32" height="32" viewBox="0 0 32 32" >
<path d="M6 7.500 C9 5.500 12 5.500 15 7.500 L13.500 15.500 C10.500 13.500 7.500 13.500 4.500 15.500Z" fill="#f0642c"/>
<path d="M16.500 8.500 C19.500 10.500 22.500 10.500 25.500 8.500 L24 16.500 C21 18.500 18 18.500 15 16.500Z" fill="#8cc83c"/>
<path d="M4 17.500 C7 15.500 10 15.500 13 17.500 L11.500 25.500 C8.500 23.500 5.500 23.500 2.500 25.500Z" fill="#3c9cdc"/>
<path d="M14.500 18.500 C17.500 20.500 20.500 20.500 23.500 18.500 L22 26.500 C19 28.500 16 28.500 13 26.500Z" fill="#fcc02c"/>
</svg>
<svg style="left:84px;top:1035px" width="44" height="42" viewBox="0 0 44 42" >
<defs><linearGradient id="fg" x1="0" y1="0" x2="0" y2="1"><stop offset="0" stop-color="#fbe9a0"/><stop offset="1" stop-color="#e9c55a"/></linearGradient><linearGradient id="fb" x1="0" y1="0" x2="0" y2="1"><stop offset="0" stop-color="#a8daf4"/><stop offset="1" stop-color="#3d9ad6"/></linearGradient></defs>
<path d="M3 8 L5 3 H14 L16 6 H38 Q40 6 40 8 V34 Q40 36 38 36 H5 Q3 36 3 34Z" fill="url(#fg)" stroke="#c9a443" stroke-width="1"/>
<rect x="7" y="4.500" width="9" height="3" fill="#fff"/><rect x="7" y="4.500" width="2" height="2" fill="#2a9a3a"/><rect x="16" y="7" width="9" height="3" fill="#fff"/><rect x="16" y="7" width="2" height="2" fill="#d83a2a"/><rect x="26" y="9" width="11" height="3.500" fill="#fff"/><rect x="26" y="9" width="2" height="2" fill="#2a6ad8"/>
<path d="M3 14 H40 V34 Q40 36 38 36 H5 Q3 36 3 34Z" fill="#f3d777" opacity=".9"/>
<path d="M7 39 V27 Q7 24 10 24 H33 Q36 24 36 27 V39 H30 V33 H13 V39Z" fill="url(#fb)" stroke="#8fd0f0" stroke-width="1"/>
</svg>
<svg style="left:154px;top:1040px" width="38" height="36" viewBox="0 0 38 36" >
<defs><linearGradient id="wb" x1="0" y1="0" x2="1" y2="1"><stop offset="0" stop-color="#7fc4ee"/><stop offset="1" stop-color="#3c82c4"/></linearGradient><radialGradient id="wo" cx=".4" cy=".35" r=".7"><stop offset="0" stop-color="#ffb24a"/><stop offset="1" stop-color="#ef6a10"/></radialGradient></defs>
<path d="M29 4 L34 5.500 V32.500 L29 34Z" fill="#a8d4f0"/><path d="M26 3 L31 4.500 V33 L26 34.500Z" fill="#8cc4ea"/>
<path d="M2 2.500 L27 2.500 V34 L2 31Z" fill="url(#wb)"/>
<circle cx="15.700" cy="17" r="10.300" fill="url(#wo)"/><path d="M11.500 10.500 L23 17 L11.500 23.500Z" fill="#fff"/>
</svg>
<svg style="left:225px;top:1036px" width="38" height="32" viewBox="0 0 38 32" >
<defs><linearGradient id="wg" x1="0" y1="0" x2="1" y2="1"><stop offset="0" stop-color="#2f5f8a"/><stop offset=".55" stop-color="#4f9a86"/><stop offset="1" stop-color="#79b07a"/></linearGradient></defs>
<rect x="1" y="1" width="36" height="29" fill="#f4f5f7" stroke="#c3c6cc"/>
<rect x="4" y="6" width="17" height="21" fill="url(#wg)"/>
<path d="M24 8H31M24 11H31M24 14H31M24 20H31M24 23H31M24 26H31" stroke="#c9ccd2" stroke-width="1"/><rect x="32.500" y="6" width="3" height="13" fill="#7aa6b8"/><path d="M28 3.500H30M32 3.500H34" stroke="#b0b4ba" stroke-width="1"/>
</svg>
<div style="left:282px;top:1033px;width:66px;height:48px;border:1px solid rgba(255,255,255,.72);border-bottom:none;border-radius:3px 3px 0 0;background:linear-gradient(160deg,rgba(255,255,255,.42) 0%,rgba(255,255,255,.30) 45%,rgba(255,255,255,.62) 100%);box-shadow:0 0 0 1px rgba(30,30,40,.55);"></div>
<svg style="left:295px;top:1036px" width="40" height="40" viewBox="0 0 40 40" shape-rendering="crispEdges">
<rect width="40" height="40" fill="rgba(255,255,255,.12)"/>
<path d="M0.5 0V40 M0 0.5H40 M3.5 0V40 M0 3.5H40 M7.5 0V40 M0 7.5H40 M11.5 0V40 M0 11.5H40 M15.5 0V40 M0 15.5H40 M19.5 0V40 M0 19.5H40 M23.5 0V40 M0 23.5H40 M27.5 0V40 M0 27.5H40 M31.5 0V40 M0 31.5H40 M35.5 0V40 M0 35.5H40 M39.5 0V40 M0 39.5H40" stroke="#00e000" stroke-width="1" fill="none"/>
<path d="M1 25.500 H8 L11 6.500 H22 L26 22 L36 26" stroke="#f4f000" stroke-width="1.1" fill="none" shape-rendering="auto"/>
<path d="M2 29H12M2 33H24M14 29H24M10 37H36M26 33H38" stroke="#b00000" stroke-width="2.500" fill="none"/>
<circle cx="33.500" cy="4.500" r="3.500" fill="#e01010" shape-rendering="auto"/><path d="M31.500 6 l2 -3.500 l2 1" stroke="#fff" stroke-width="1.300" fill="none" shape-rendering="auto"/>
</svg>
<svg style="left:1668px;top:1044px" width="145" height="26" viewBox="0 0 145 26" >
<path d="M4 15.500 L8.700 10 L13.400 15.500Z" fill="#e8e8f4"/>
<rect x="32.500" y="5.500" width="10" height="16" rx="1.500" fill="none" stroke="#f4f4f4" stroke-width="1.600"/><rect x="35" y="3.300" width="5" height="2" fill="#f4f4f4"/><rect x="34.500" y="8" width="6" height="12" fill="#f4f4f4"/>
<path d="M45 6.500V10M49.500 6.500V10" stroke="#f4f4f4" stroke-width="1.600"/><path d="M43.500 10 H51 V13.500 Q51 16 48.500 16 H46 Q43.500 16 43.500 13.500Z" fill="#f4f4f4"/><path d="M47.300 16V22" stroke="#f4f4f4" stroke-width="2"/>
<path d="M63 4.500V23" stroke="#f4f4f4" stroke-width="1.800"/><path d="M64.500 5.500 C68 4 71 4.500 73 6.500 C75 8 78 8 80.500 7 L78.500 14 C76 15.500 73 15 71 13.500 C69 12 66.500 12.500 64.500 13.500Z" fill="#f4f4f4"/>
<path d="M92 11 H96 L102 5 V23 L96 17 H92Z" fill="#f4f4f4"/><path d="M105 10 Q107.500 14 105 18" stroke="#f4f4f4" stroke-width="1.400" fill="none"/><path d="M108 7.500 Q112 14 108 20.500" stroke="#f4f4f4" stroke-width="1.400" fill="none"/>
<rect x="124.0" y="16" width="2" height="4" fill="#f4f4f4"/>
<rect x="126.9" y="13.5" width="2" height="6.5" fill="#f4f4f4"/>
<rect x="129.8" y="11" width="2" height="9" fill="#f4f4f4"/>
<rect x="132.7" y="8.5" width="2" height="11.5" fill="#f4f4f4"/>
<rect x="135.6" y="6" width="2" height="14" fill="#f4f4f4"/>
</svg>
<span class="t" style="top:1039.47px;font-size:14.8px;line-height:14.8px;color:#fff;left:1833.44px;transform-origin:50% 0;transform:scaleX(0.9253);">8:19 PM</span>
<span class="t" style="top:1061.27px;font-size:14.8px;line-height:14.8px;color:#fff;left:1828.08px;transform-origin:50% 0;transform:scaleX(1.0252);">1/15/2019</span>
<div style="left:1905px;top:1033px;width:15px;height:47px;border:1px solid rgba(200,200,210,.55);border-right:none;background:linear-gradient(135deg,rgba(255,255,255,.30) 0%,rgba(255,255,255,.10) 50%,rgba(255,255,255,.02) 100%);box-shadow:-1px 0 0 rgba(20,20,25,.7);"></div>
</body></html>
